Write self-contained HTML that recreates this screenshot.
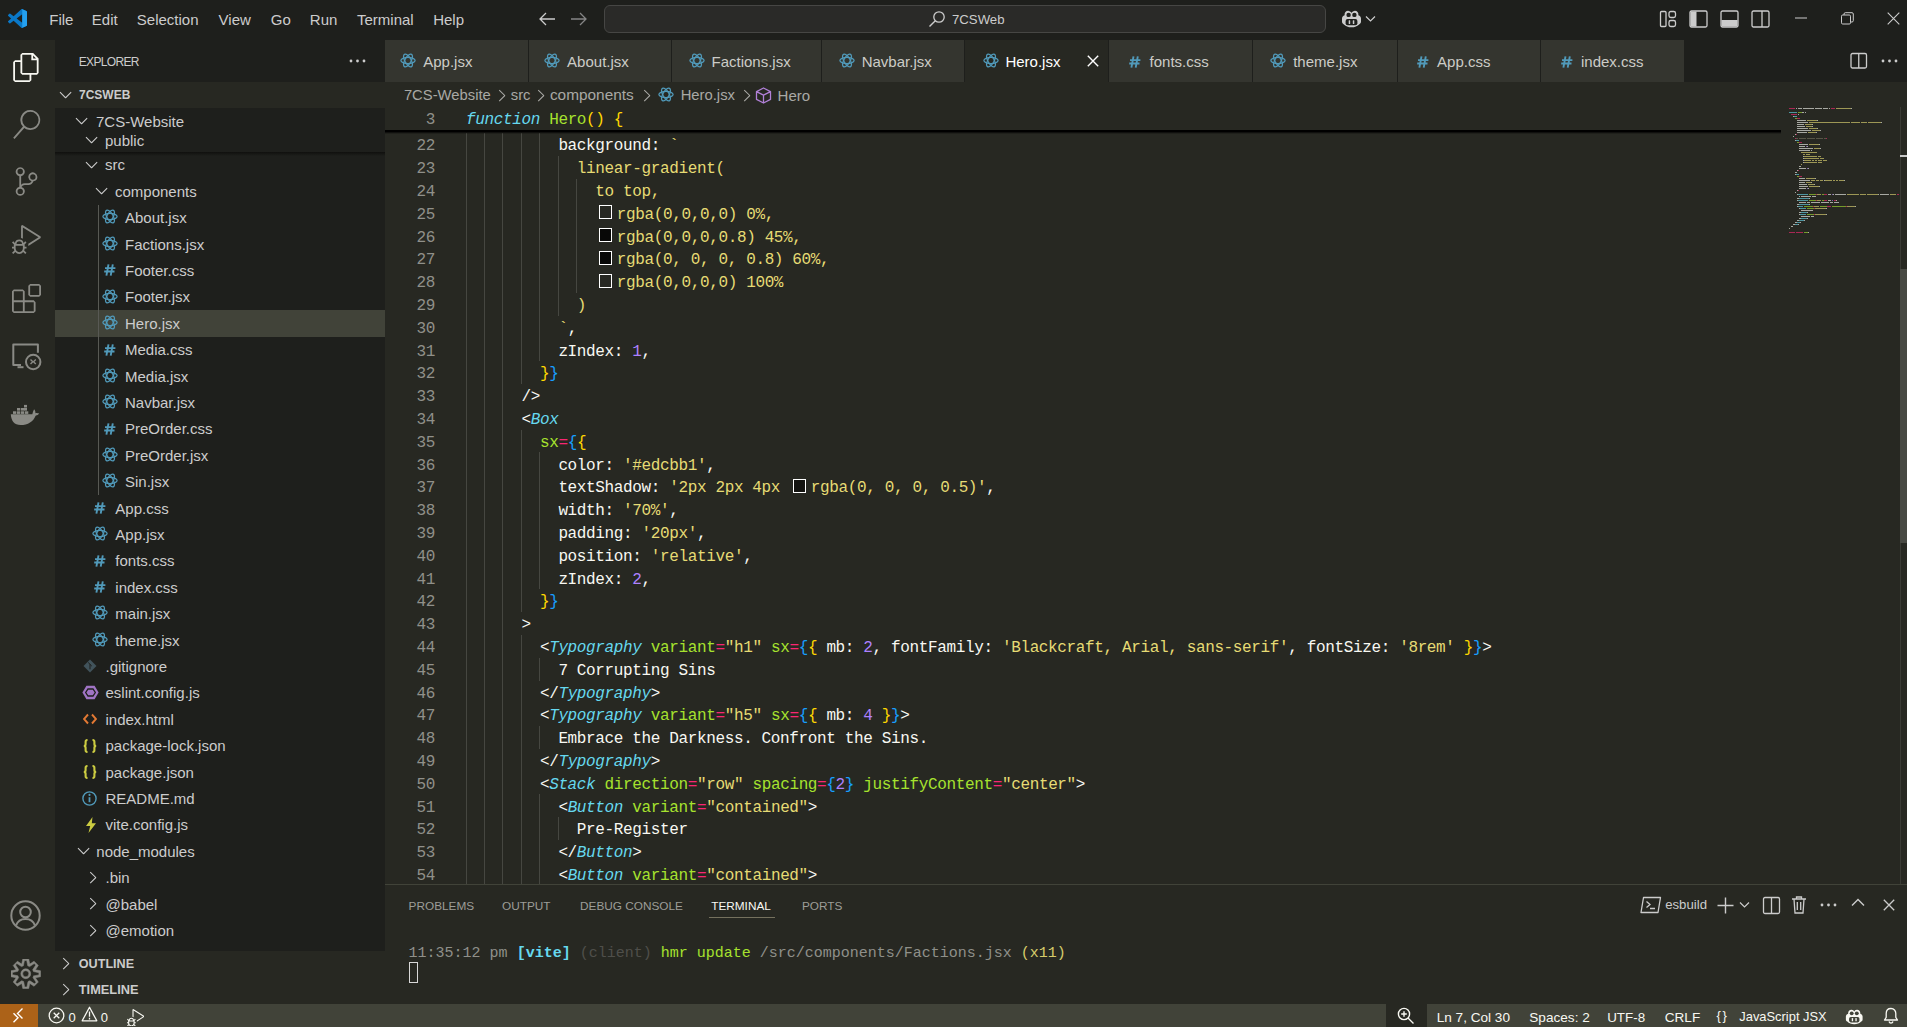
<!DOCTYPE html><html><head><meta charset="utf-8"><style>
html,body{margin:0;padding:0;width:1907px;height:1027px;overflow:hidden;background:#1e1f1c;font-family:"Liberation Sans",sans-serif;}
#root{position:relative;width:1907px;height:1027px;overflow:hidden;}
.code{font-family:"Liberation Mono",monospace;white-space:pre;letter-spacing:-0.364px;}
</style></head><body><div id="root">
<div style="position:absolute;left:0px;top:0px;width:1907px;height:40px;background:#1e1f1c;"></div>
<div style="position:absolute;left:0px;top:40px;width:55px;height:964px;background:#272822;"></div>
<div style="position:absolute;left:55px;top:40px;width:330px;height:964px;background:#1e1f1c;"></div>
<div style="position:absolute;left:385px;top:40px;width:1522px;height:42px;background:#1e1f1c;"></div>
<div style="position:absolute;left:385px;top:82px;width:1522px;height:802px;background:#272822;"></div>
<div style="position:absolute;left:385px;top:884px;width:1522px;height:120px;background:#272822;"></div>
<div style="position:absolute;left:385px;top:884px;width:1522px;height:1px;background:#414339;"></div>
<div style="position:absolute;left:0px;top:1004px;width:1907px;height:23px;background:#414339;"></div>
<svg style="position:absolute;left:8px;top:9px;" width="19" height="19" viewBox="0 0 100 100" fill="none"><path fill="#0a78c8" d="M96.46 10.8L75.86.87a6.23 6.23 0 0 0-7.1 1.21L29.55 37.85 12.46 24.88a4.16 4.16 0 0 0-5.32.24L1.64 30.1a4.17 4.17 0 0 0 0 6.16L16.46 50 1.64 63.74a4.17 4.17 0 0 0 0 6.16l5.5 4.99a4.16 4.16 0 0 0 5.32.24l17.09-12.97 39.21 35.77a6.22 6.22 0 0 0 7.1 1.21l20.6-9.92A6.25 6.25 0 0 0 100 83.6V16.4a6.25 6.25 0 0 0-3.54-5.6zM75.02 72.7L45.28 50l29.74-22.7z"/><path fill="#24a0f0" d="M75.86.87L96.46 10.8A6.25 6.25 0 0 1 100 16.4v67.2a6.25 6.25 0 0 1-3.54 5.63l-20.6 9.92a6.22 6.22 0 0 1-7.1-1.21 3.66 3.66 0 0 0 6.26-2.59V3.46A3.66 3.66 0 0 0 68.76 2.08 6.23 6.23 0 0 1 75.86.87z"/></svg>
<div style="position:absolute;left:49.3px;top:9.10px;height:21px;line-height:21px;font-size:15px;color:#cccccc;font-weight:normal;font-family:'Liberation Sans', sans-serif;white-space:pre;">File</div>
<div style="position:absolute;left:91.8px;top:9.10px;height:21px;line-height:21px;font-size:15px;color:#cccccc;font-weight:normal;font-family:'Liberation Sans', sans-serif;white-space:pre;">Edit</div>
<div style="position:absolute;left:136.8px;top:9.10px;height:21px;line-height:21px;font-size:15px;color:#cccccc;font-weight:normal;font-family:'Liberation Sans', sans-serif;white-space:pre;">Selection</div>
<div style="position:absolute;left:218.6px;top:9.10px;height:21px;line-height:21px;font-size:15px;color:#cccccc;font-weight:normal;font-family:'Liberation Sans', sans-serif;white-space:pre;">View</div>
<div style="position:absolute;left:270.8px;top:9.10px;height:21px;line-height:21px;font-size:15px;color:#cccccc;font-weight:normal;font-family:'Liberation Sans', sans-serif;white-space:pre;">Go</div>
<div style="position:absolute;left:309.8px;top:9.10px;height:21px;line-height:21px;font-size:15px;color:#cccccc;font-weight:normal;font-family:'Liberation Sans', sans-serif;white-space:pre;">Run</div>
<div style="position:absolute;left:357px;top:9.10px;height:21px;line-height:21px;font-size:15px;color:#cccccc;font-weight:normal;font-family:'Liberation Sans', sans-serif;white-space:pre;">Terminal</div>
<div style="position:absolute;left:433.2px;top:9.10px;height:21px;line-height:21px;font-size:15px;color:#cccccc;font-weight:normal;font-family:'Liberation Sans', sans-serif;white-space:pre;">Help</div>
<svg style="position:absolute;left:538px;top:11px;" width="18" height="16" viewBox="0 0 18 16" fill="none"><path d="M17 8H2M8 2L2 8l6 6" stroke="#cccccc" stroke-width="1.3"/></svg>
<svg style="position:absolute;left:570px;top:11px;" width="18" height="16" viewBox="0 0 18 16" fill="none"><path d="M1 8h15M10 2l6 6-6 6" stroke="#858585" stroke-width="1.3"/></svg>
<div style="position:absolute;left:604px;top:5px;width:720px;height:26px;border:1px solid #464644;border-radius:6px;background:#2a2a28;"></div>
<svg style="position:absolute;left:928px;top:10px;" width="18" height="18" viewBox="0 0 18 18" fill="none"><circle cx="11" cy="7" r="5.2" stroke="#cccccc" stroke-width="1.3"/><path d="M7.3 10.7L1.5 16.5" stroke="#cccccc" stroke-width="1.4"/></svg>
<div style="position:absolute;left:952px;top:11.40px;height:18px;line-height:18px;font-size:13.2px;color:#cccccc;font-weight:normal;font-family:'Liberation Sans', sans-serif;white-space:pre;">7CSWeb</div>
<svg style="position:absolute;left:1340.5px;top:9.5px;" width="22.0" height="19.0" viewBox="0 0 22.0 19.0" fill="none"><g transform="scale(1.0)"><path d="M3.6 5.3C3.3 2.3 5.3.6 7.6.9c1.5.2 2.5 1 2.9 2 .4-1 1.4-1.8 2.9-2 2.3-.3 4.3 1.4 4 4.4 1.6.6 2.6 1.7 2.6 3.2v3.3c0 1-.6 1.8-1.6 2.4C16.5 16.2 13.700 17.300 10.5 17.300S4.5 16.2 2.6 14.2C1.6 13.6 1 12.8 1 11.8V8.500c0-1.5 1-2.6 2.600-3.200z" fill="#cccccc"/><ellipse cx="7.6" cy="4.9" rx="2.2" ry="2.2" fill="#1e1f1c"/><ellipse cx="13.4" cy="4.9" rx="2.2" ry="2.2" fill="#1e1f1c"/><rect x="4.6" y="9" width="11.8" height="6.2" rx="2" fill="#1e1f1c"/><rect x="7.7" y="10.2" width="1.5" height="3.8" rx=".5" fill="#cccccc"/><rect x="11.8" y="10.2" width="1.5" height="3.8" rx=".5" fill="#cccccc"/></g></svg>
<svg style="position:absolute;left:1365px;top:15px;" width="11" height="8" viewBox="0 0 11 8" fill="none"><path d="M1 1.5l4.5 4.5L10 1.5" stroke="#cccccc" stroke-width="1.2"/></svg>
<svg style="position:absolute;left:1659px;top:10px;" width="18" height="18" viewBox="0 0 18 18" fill="none"><rect x="1.5" y="1.5" width="5.5" height="15" rx="1" stroke="#cccccc" stroke-width="1.3"/><rect x="10" y="1.5" width="6.5" height="6" rx="1.8" stroke="#cccccc" stroke-width="1.3"/><rect x="10" y="10.5" width="6.5" height="6" rx="1.8" stroke="#cccccc" stroke-width="1.3"/></svg>
<svg style="position:absolute;left:1689px;top:10px;" width="19" height="18" viewBox="0 0 19 18" fill="none"><rect x="1" y="1" width="17" height="16" rx="1.5" stroke="#cccccc" stroke-width="1.3"/><rect x="1.5" y="1.5" width="6" height="15" fill="#cccccc"/></svg>
<svg style="position:absolute;left:1720px;top:10px;" width="19" height="18" viewBox="0 0 19 18" fill="none"><rect x="1" y="1" width="17" height="16" rx="1.5" stroke="#cccccc" stroke-width="1.3"/><rect x="1.5" y="10" width="16" height="6.5" fill="#cccccc"/></svg>
<svg style="position:absolute;left:1751px;top:10px;" width="19" height="18" viewBox="0 0 19 18" fill="none"><rect x="1" y="1" width="17" height="16" rx="1.5" stroke="#cccccc" stroke-width="1.3"/><path d="M11 1v16" stroke="#cccccc" stroke-width="1.3"/></svg>
<svg style="position:absolute;left:1795px;top:17px;" width="13" height="2" viewBox="0 0 13 2" fill="none"><path d="M0 1h12" stroke="#cccccc" stroke-width="1"/></svg>
<svg style="position:absolute;left:1841px;top:12px;" width="13" height="13" viewBox="0 0 13 13" fill="none"><rect x="0.5" y="3" width="9" height="9" rx="1.2" stroke="#cccccc" stroke-width="1"/><path d="M3 3V2c0-.8.5-1.3 1.3-1.3H11c.8 0 1.3.5 1.3 1.3v6.7c0 .8-.5 1.3-1.3 1.3h-1" stroke="#cccccc" stroke-width="1"/></svg>
<svg style="position:absolute;left:1887px;top:12px;" width="13" height="13" viewBox="0 0 13 13" fill="none"><path d="M.7.7l11.6 11.6M12.3.7L.7 12.3" stroke="#cccccc" stroke-width="1.1"/></svg>
<svg style="position:absolute;left:11.5px;top:53px;" width="29" height="29" viewBox="0 0 24 24" fill="none"><path fill="#f8f8f2" fill-rule="evenodd" d="M17.5 0h-9L7 1.5V6H2.5L1 7.5v15.07L2.5 24h12.07L16 22.57V18h4.7l1.3-1.43V4.5L17.5 0zm0 2.12l2.38 2.38H17.5V2.12zm-3 20.38h-12v-15H7v9.07L8.5 18h6v4.5zm6-6h-12v-15H16V6h4.5v10.5z"/></svg>
<svg style="position:absolute;left:12px;top:110px;" width="29" height="29" viewBox="0 0 24 24" fill="none"><path fill="#8a8a85" fill-rule="evenodd" d="M15.25 0a8.25 8.25 0 0 0-6.18 13.72L1 22.88l1.12 1.12 8.05-9.12A8.251 8.251 0 1 0 15.25.01V0zm0 15a6.75 6.75 0 1 1 0-13.5 6.75 6.75 0 0 1 0 13.5z"/></svg>
<svg style="position:absolute;left:11.5px;top:167px;" width="29" height="29" viewBox="0 0 24 24" fill="none"><path fill="#8a8a85" fill-rule="evenodd" d="M21.007 8.222A3.738 3.738 0 0 0 15.045 5.2a3.737 3.737 0 0 0 1.156 6.583 2.988 2.988 0 0 1-2.668 1.67h-2.99a4.456 4.456 0 0 0-2.989 1.165V7.559a3.738 3.738 0 1 0-1.494 0v8.882a3.738 3.738 0 1 0 1.816.063 2.99 2.99 0 0 1 2.668-1.669h2.99a4.484 4.484 0 0 0 4.223-3.039 3.736 3.736 0 0 0 3.25-3.574zM4.565 3.738a2.242 2.242 0 1 1 4.484 0 2.242 2.242 0 0 1-4.484 0zm4.484 16.441a2.242 2.242 0 1 1-4.484 0 2.242 2.242 0 0 1 4.484 0zm8.221-9.715a2.242 2.242 0 1 1 0-4.485 2.242 2.242 0 0 1 0 4.485z"/></svg>
<svg style="position:absolute;left:11.5px;top:225px;" width="29" height="29" viewBox="0 0 24 24" fill="none"><path fill="#8a8a85" fill-rule="evenodd" d="M10.94 13.5l-1.32 1.32a3.73 3.73 0 0 0-7.24 0L1.06 13.5 0 14.56l1.72 1.72-.22.22V18H0v1.5h1.5v.08c.077.489.214.966.41 1.42L0 22.94 1.06 24l1.65-1.65A4.308 4.308 0 0 0 6 24a4.31 4.31 0 0 0 3.29-1.65L10.94 24 12 22.94 10.09 21c.198-.464.336-.951.41-1.45v-.1H12V18h-1.5v-1.5l-.22-.22L12 14.560l-1.06-1.06zM6 13.5a2.25 2.25 0 0 1 2.25 2.25h-4.5A2.25 2.25 0 0 1 6 13.5zm3 6a3.33 3.33 0 0 1-3 3 3.33 3.33 0 0 1-3-3v-2.25h6v2.25zm14.76-9.9v1.26L13.5 17.37V15.6l8.5-5.37L9 2v9.46a5.07 5.07 0 0 0-1.5-.72V.63L8.64 0l15.12 9.6z"/></svg>
<svg style="position:absolute;left:12px;top:284px;" width="29" height="29" viewBox="0 0 24 24" fill="none"><path fill="#8a8a85" fill-rule="evenodd" d="M13.5 1.5L15 0h7.5L24 1.5V9l-1.5 1.5H15L13.5 9V1.5zm1.5 0V9h7.5V1.5H15zM0 15V6l1.5-1.5H9L10.5 6v7.5H18l1.5 1.5v7.5L18 24H1.5L0 22.5V15zm9-1.5V6H1.5v7.5H9zM9 15H1.5v7.5H9V15zm1.5 7.5H18V15h-7.5v7.5z"/></svg>
<svg style="position:absolute;left:0px;top:330px;" width="55" height="50" viewBox="0 0 55 50" fill="none"><path d="M21 35H13.3V14.5h24.6v8.3" stroke="#8a8a85" stroke-width="2" stroke-linejoin="round" fill="none"/><path d="M17.5 37.2h6" stroke="#8a8a85" stroke-width="2"/><circle cx="33.2" cy="32" r="7.2" stroke="#8a8a85" stroke-width="2" fill="none"/><path d="M30.5 29.5l2.3 2.3-2.3 2.3M35.8 29.5l-2.3 2.3 2.3 2.3" stroke="#8a8a85" stroke-width="1.4" fill="none"/></svg>
<svg style="position:absolute;left:0px;top:400px;" width="55" height="30" viewBox="0 0 55 30" fill="none"><path d="M10.8 14.2H32.3c.5-1.8 1-3.6 1.8-5 1.2 1.3 1.4 2.8 1.3 4 1.3-.3 2.8-.1 3.8.4-.9 1.2-2 1.9-3.6 2.1C33.4 21.5 28 25 20.5 25 14.500 25 11.2 21 10.8 14.2z" fill="#8a8a85"/><g fill="#8a8a85"><rect x="13" y="11.3" width="3.3" height="2.6"/><rect x="17" y="11.3" width="3.3" height="2.6"/><rect x="21" y="11.3" width="3.3" height="2.6"/><rect x="25" y="11.3" width="3.3" height="2.6"/><rect x="17" y="8" width="3.3" height="2.6"/><rect x="21" y="8" width="3.3" height="2.6"/><rect x="24" y="4.9" width="3" height="2.6"/><rect x="24" y="8" width="3" height="2.6"/></g></svg>
<svg style="position:absolute;left:10px;top:900px;" width="31" height="31" viewBox="0 0 31 31" fill="none"><circle cx="15.5" cy="15.5" r="14.2" stroke="#8a8a85" stroke-width="2"/><circle cx="15.5" cy="12" r="5.3" stroke="#8a8a85" stroke-width="2"/><path d="M6 25.5c1.5-4.3 5-6.6 9.5-6.6s8 2.3 9.5 6.6" stroke="#8a8a85" stroke-width="2"/></svg>
<svg style="position:absolute;left:11px;top:959px;" width="29.5" height="29.5" viewBox="0 0 24 24" fill="none"><path fill="#8a8a85" stroke="#8a8a85" stroke-width="0.45" fill-rule="evenodd" d="M19.85 8.75l4.15.83v4.84l-4.15.83 2.35 3.52-3.43 3.43-3.52-2.35-.83 4.15H9.58l-.83-4.15-3.52 2.35-3.43-3.43 2.35-3.52L0 14.42V9.58l4.15-.83L1.8 5.23 5.23 1.8l3.52 2.35L9.58 0h4.84l.83 4.15 3.52-2.35 3.43 3.43-2.35 3.52zm-1.57 5.07l4.42-.88V11.1l-4.42-.88-.62-1.5 2.5-3.75L18.9 3.7l-3.75 2.5-1.5-.62-.88-4.42h-1.84l-.88 4.42-1.5.62L4.8 3.7 3.7 4.8l2.5 3.75-.62 1.5-4.42.88v1.84l4.42.88.62 1.5-2.5 3.75 1.3 1.3 3.75-2.5 1.5.62.88 4.42h1.84l.88-4.42 1.5-.62 3.75 2.5 1.3-1.3-2.5-3.75.62-1.5zM12 8a4 4 0 1 1 0 8 4 4 0 0 1 0-8zm0 6.5a2.5 2.5 0 1 0 0-5 2.5 2.5 0 0 0 0 5z"/></svg>
<div style="position:absolute;left:78.8px;top:53.80px;height:17px;line-height:17px;font-size:12px;color:#cccccc;font-weight:normal;font-family:'Liberation Sans', sans-serif;white-space:pre;letter-spacing:-0.68px;">EXPLORER</div>
<svg style="position:absolute;left:349px;top:59px;" width="18" height="4" viewBox="0 0 18 4" fill="none"><circle cx="2" cy="2" r="1.4" fill="#cccccc"/><circle cx="8.5" cy="2" r="1.4" fill="#cccccc"/><circle cx="15" cy="2" r="1.4" fill="#cccccc"/></svg>
<div style="position:absolute;left:55px;top:82px;width:330px;height:26px;background:#272822;"></div>
<svg style="position:absolute;left:56.4px;top:85px;" width="19.2" height="19.2" viewBox="0 0 16 16" fill="none"><path fill="#cccccc" d="M7.976 10.072l4.357-4.357.62.618L8.284 11h-.618L3 6.333l.619-.618 4.357 4.357z"/></svg>
<div style="position:absolute;left:79px;top:87.00px;height:17px;line-height:17px;font-size:12px;color:#cccccc;font-weight:bold;font-family:'Liberation Sans', sans-serif;white-space:pre;">7CSWEB</div>
<div style="position:absolute;left:55px;top:310px;width:330px;height:27px;background:#414339;"></div>
<div style="position:absolute;left:98px;top:204.5px;width:1px;height:290.4px;background:#585954;"></div>
<svg style="position:absolute;left:82.2px;top:154.79999999999998px;" width="19.2" height="19.2" viewBox="0 0 16 16" fill="none"><path fill="#cccccc" d="M7.976 10.072l4.357-4.357.62.618L8.284 11h-.618L3 6.333l.619-.618 4.357 4.357z"/></svg>
<div style="position:absolute;left:105px;top:154.30px;height:21px;line-height:21px;font-size:15px;color:#cccccc;font-weight:normal;font-family:'Liberation Sans', sans-serif;white-space:pre;">src</div>
<svg style="position:absolute;left:92.2px;top:181.2px;" width="19.2" height="19.2" viewBox="0 0 16 16" fill="none"><path fill="#cccccc" d="M7.976 10.072l4.357-4.357.62.618L8.284 11h-.618L3 6.333l.619-.618 4.357 4.357z"/></svg>
<div style="position:absolute;left:115px;top:180.70px;height:21px;line-height:21px;font-size:15px;color:#cccccc;font-weight:normal;font-family:'Liberation Sans', sans-serif;white-space:pre;">components</div>
<svg style="position:absolute;left:102.0px;top:209.29999999999995px;" width="16" height="15" viewBox="0 0 16 15" fill="none"><g stroke="#519aba" stroke-width="1.25" fill="none"><ellipse cx="8" cy="7.5" rx="7.1" ry="3.1"/><ellipse cx="8" cy="7.5" rx="7.1" ry="3.1" transform="rotate(60 8 7.5)"/><ellipse cx="8" cy="7.5" rx="7.1" ry="3.1" transform="rotate(-60 8 7.5)"/></g></svg>
<div style="position:absolute;left:125px;top:207.10px;height:21px;line-height:21px;font-size:15px;color:#cccccc;font-weight:normal;font-family:'Liberation Sans', sans-serif;white-space:pre;">About.jsx</div>
<svg style="position:absolute;left:102.0px;top:235.69999999999996px;" width="16" height="15" viewBox="0 0 16 15" fill="none"><g stroke="#519aba" stroke-width="1.25" fill="none"><ellipse cx="8" cy="7.5" rx="7.1" ry="3.1"/><ellipse cx="8" cy="7.5" rx="7.1" ry="3.1" transform="rotate(60 8 7.5)"/><ellipse cx="8" cy="7.5" rx="7.1" ry="3.1" transform="rotate(-60 8 7.5)"/></g></svg>
<div style="position:absolute;left:125px;top:233.50px;height:21px;line-height:21px;font-size:15px;color:#cccccc;font-weight:normal;font-family:'Liberation Sans', sans-serif;white-space:pre;">Factions.jsx</div>
<svg style="position:absolute;left:104.0px;top:264.4px;" width="12" height="12" viewBox="0 0 12 12" fill="none"><path d="M4.5 0.3L2.4 11.6M8.8 0.3L6.7 11.6M1 4.1h10.4M0.2 7.5h10.3" stroke="#519aba" stroke-width="1.9"/></svg>
<div style="position:absolute;left:125px;top:259.90px;height:21px;line-height:21px;font-size:15px;color:#cccccc;font-weight:normal;font-family:'Liberation Sans', sans-serif;white-space:pre;">Footer.css</div>
<svg style="position:absolute;left:102.0px;top:288.5px;" width="16" height="15" viewBox="0 0 16 15" fill="none"><g stroke="#519aba" stroke-width="1.25" fill="none"><ellipse cx="8" cy="7.5" rx="7.1" ry="3.1"/><ellipse cx="8" cy="7.5" rx="7.1" ry="3.1" transform="rotate(60 8 7.5)"/><ellipse cx="8" cy="7.5" rx="7.1" ry="3.1" transform="rotate(-60 8 7.5)"/></g></svg>
<div style="position:absolute;left:125px;top:286.30px;height:21px;line-height:21px;font-size:15px;color:#cccccc;font-weight:normal;font-family:'Liberation Sans', sans-serif;white-space:pre;">Footer.jsx</div>
<svg style="position:absolute;left:102.0px;top:314.9px;" width="16" height="15" viewBox="0 0 16 15" fill="none"><g stroke="#519aba" stroke-width="1.25" fill="none"><ellipse cx="8" cy="7.5" rx="7.1" ry="3.1"/><ellipse cx="8" cy="7.5" rx="7.1" ry="3.1" transform="rotate(60 8 7.5)"/><ellipse cx="8" cy="7.5" rx="7.1" ry="3.1" transform="rotate(-60 8 7.5)"/></g></svg>
<div style="position:absolute;left:125px;top:312.70px;height:21px;line-height:21px;font-size:15px;color:#cccccc;font-weight:normal;font-family:'Liberation Sans', sans-serif;white-space:pre;">Hero.jsx</div>
<svg style="position:absolute;left:104.0px;top:343.59999999999997px;" width="12" height="12" viewBox="0 0 12 12" fill="none"><path d="M4.5 0.3L2.4 11.6M8.8 0.3L6.7 11.6M1 4.1h10.4M0.2 7.5h10.3" stroke="#519aba" stroke-width="1.9"/></svg>
<div style="position:absolute;left:125px;top:339.10px;height:21px;line-height:21px;font-size:15px;color:#cccccc;font-weight:normal;font-family:'Liberation Sans', sans-serif;white-space:pre;">Media.css</div>
<svg style="position:absolute;left:102.0px;top:367.69999999999993px;" width="16" height="15" viewBox="0 0 16 15" fill="none"><g stroke="#519aba" stroke-width="1.25" fill="none"><ellipse cx="8" cy="7.5" rx="7.1" ry="3.1"/><ellipse cx="8" cy="7.5" rx="7.1" ry="3.1" transform="rotate(60 8 7.5)"/><ellipse cx="8" cy="7.5" rx="7.1" ry="3.1" transform="rotate(-60 8 7.5)"/></g></svg>
<div style="position:absolute;left:125px;top:365.50px;height:21px;line-height:21px;font-size:15px;color:#cccccc;font-weight:normal;font-family:'Liberation Sans', sans-serif;white-space:pre;">Media.jsx</div>
<svg style="position:absolute;left:102.0px;top:394.09999999999997px;" width="16" height="15" viewBox="0 0 16 15" fill="none"><g stroke="#519aba" stroke-width="1.25" fill="none"><ellipse cx="8" cy="7.5" rx="7.1" ry="3.1"/><ellipse cx="8" cy="7.5" rx="7.1" ry="3.1" transform="rotate(60 8 7.5)"/><ellipse cx="8" cy="7.5" rx="7.1" ry="3.1" transform="rotate(-60 8 7.5)"/></g></svg>
<div style="position:absolute;left:125px;top:391.90px;height:21px;line-height:21px;font-size:15px;color:#cccccc;font-weight:normal;font-family:'Liberation Sans', sans-serif;white-space:pre;">Navbar.jsx</div>
<svg style="position:absolute;left:104.0px;top:422.8px;" width="12" height="12" viewBox="0 0 12 12" fill="none"><path d="M4.5 0.3L2.4 11.6M8.8 0.3L6.7 11.6M1 4.1h10.4M0.2 7.5h10.3" stroke="#519aba" stroke-width="1.9"/></svg>
<div style="position:absolute;left:125px;top:418.30px;height:21px;line-height:21px;font-size:15px;color:#cccccc;font-weight:normal;font-family:'Liberation Sans', sans-serif;white-space:pre;">PreOrder.css</div>
<svg style="position:absolute;left:102.0px;top:446.9px;" width="16" height="15" viewBox="0 0 16 15" fill="none"><g stroke="#519aba" stroke-width="1.25" fill="none"><ellipse cx="8" cy="7.5" rx="7.1" ry="3.1"/><ellipse cx="8" cy="7.5" rx="7.1" ry="3.1" transform="rotate(60 8 7.5)"/><ellipse cx="8" cy="7.5" rx="7.1" ry="3.1" transform="rotate(-60 8 7.5)"/></g></svg>
<div style="position:absolute;left:125px;top:444.70px;height:21px;line-height:21px;font-size:15px;color:#cccccc;font-weight:normal;font-family:'Liberation Sans', sans-serif;white-space:pre;">PreOrder.jsx</div>
<svg style="position:absolute;left:102.0px;top:473.29999999999995px;" width="16" height="15" viewBox="0 0 16 15" fill="none"><g stroke="#519aba" stroke-width="1.25" fill="none"><ellipse cx="8" cy="7.5" rx="7.1" ry="3.1"/><ellipse cx="8" cy="7.5" rx="7.1" ry="3.1" transform="rotate(60 8 7.5)"/><ellipse cx="8" cy="7.5" rx="7.1" ry="3.1" transform="rotate(-60 8 7.5)"/></g></svg>
<div style="position:absolute;left:125px;top:471.10px;height:21px;line-height:21px;font-size:15px;color:#cccccc;font-weight:normal;font-family:'Liberation Sans', sans-serif;white-space:pre;">Sin.jsx</div>
<svg style="position:absolute;left:94.3px;top:501.99999999999994px;" width="12" height="12" viewBox="0 0 12 12" fill="none"><path d="M4.5 0.3L2.4 11.6M8.8 0.3L6.7 11.6M1 4.1h10.4M0.2 7.5h10.3" stroke="#519aba" stroke-width="1.9"/></svg>
<div style="position:absolute;left:115.3px;top:497.50px;height:21px;line-height:21px;font-size:15px;color:#cccccc;font-weight:normal;font-family:'Liberation Sans', sans-serif;white-space:pre;">App.css</div>
<svg style="position:absolute;left:92.3px;top:526.1px;" width="16" height="15" viewBox="0 0 16 15" fill="none"><g stroke="#519aba" stroke-width="1.25" fill="none"><ellipse cx="8" cy="7.5" rx="7.1" ry="3.1"/><ellipse cx="8" cy="7.5" rx="7.1" ry="3.1" transform="rotate(60 8 7.5)"/><ellipse cx="8" cy="7.5" rx="7.1" ry="3.1" transform="rotate(-60 8 7.5)"/></g></svg>
<div style="position:absolute;left:115.3px;top:523.90px;height:21px;line-height:21px;font-size:15px;color:#cccccc;font-weight:normal;font-family:'Liberation Sans', sans-serif;white-space:pre;">App.jsx</div>
<svg style="position:absolute;left:94.3px;top:554.8000000000001px;" width="12" height="12" viewBox="0 0 12 12" fill="none"><path d="M4.5 0.3L2.4 11.6M8.8 0.3L6.7 11.6M1 4.1h10.4M0.2 7.5h10.3" stroke="#519aba" stroke-width="1.9"/></svg>
<div style="position:absolute;left:115.3px;top:550.30px;height:21px;line-height:21px;font-size:15px;color:#cccccc;font-weight:normal;font-family:'Liberation Sans', sans-serif;white-space:pre;">fonts.css</div>
<svg style="position:absolute;left:94.3px;top:581.2px;" width="12" height="12" viewBox="0 0 12 12" fill="none"><path d="M4.5 0.3L2.4 11.6M8.8 0.3L6.7 11.6M1 4.1h10.4M0.2 7.5h10.3" stroke="#519aba" stroke-width="1.9"/></svg>
<div style="position:absolute;left:115.3px;top:576.70px;height:21px;line-height:21px;font-size:15px;color:#cccccc;font-weight:normal;font-family:'Liberation Sans', sans-serif;white-space:pre;">index.css</div>
<svg style="position:absolute;left:92.3px;top:605.3000000000001px;" width="16" height="15" viewBox="0 0 16 15" fill="none"><g stroke="#519aba" stroke-width="1.25" fill="none"><ellipse cx="8" cy="7.5" rx="7.1" ry="3.1"/><ellipse cx="8" cy="7.5" rx="7.1" ry="3.1" transform="rotate(60 8 7.5)"/><ellipse cx="8" cy="7.5" rx="7.1" ry="3.1" transform="rotate(-60 8 7.5)"/></g></svg>
<div style="position:absolute;left:115.3px;top:603.10px;height:21px;line-height:21px;font-size:15px;color:#cccccc;font-weight:normal;font-family:'Liberation Sans', sans-serif;white-space:pre;">main.jsx</div>
<svg style="position:absolute;left:92.3px;top:631.7px;" width="16" height="15" viewBox="0 0 16 15" fill="none"><g stroke="#519aba" stroke-width="1.25" fill="none"><ellipse cx="8" cy="7.5" rx="7.1" ry="3.1"/><ellipse cx="8" cy="7.5" rx="7.1" ry="3.1" transform="rotate(60 8 7.5)"/><ellipse cx="8" cy="7.5" rx="7.1" ry="3.1" transform="rotate(-60 8 7.5)"/></g></svg>
<div style="position:absolute;left:115.3px;top:629.50px;height:21px;line-height:21px;font-size:15px;color:#cccccc;font-weight:normal;font-family:'Liberation Sans', sans-serif;white-space:pre;">theme.jsx</div>
<svg style="position:absolute;left:83.0px;top:659.4px;" width="14" height="14" viewBox="0 0 14 14" fill="none"><path d="M7 0.5L13.5 7 7 13.5 0.5 7z" fill="#41535b"/><path d="M5.2 3.5l3.6 3.6M7 5.3v5" stroke="#1e1f1c" stroke-width="1"/></svg>
<div style="position:absolute;left:105.5px;top:655.90px;height:21px;line-height:21px;font-size:15px;color:#cccccc;font-weight:normal;font-family:'Liberation Sans', sans-serif;white-space:pre;">.gitignore</div>
<svg style="position:absolute;left:81.5px;top:685.3000000000001px;" width="17" height="15" viewBox="0 0 17 15" fill="none"><path d="M4.4 .8h8.2l4 6.7-4 6.7H4.4L.4 7.5z" fill="#a074c4"/><path d="M6 4h5l2.3 3.5L11 11H6L3.7 7.5z" stroke="#1e1f1c" stroke-width="1.3" fill="none"/></svg>
<div style="position:absolute;left:105.5px;top:682.30px;height:21px;line-height:21px;font-size:15px;color:#cccccc;font-weight:normal;font-family:'Liberation Sans', sans-serif;white-space:pre;">eslint.config.js</div>
<svg style="position:absolute;left:83.0px;top:713.2px;" width="14" height="12" viewBox="0 0 14 12" fill="none"><path d="M5 1.5L1 6l4 4.5M9 1.5L13 6l-4 4.5" stroke="#e37933" stroke-width="1.9"/></svg>
<div style="position:absolute;left:105.5px;top:708.70px;height:21px;line-height:21px;font-size:15px;color:#cccccc;font-weight:normal;font-family:'Liberation Sans', sans-serif;white-space:pre;">index.html</div>
<svg style="position:absolute;left:83.0px;top:738.6px;" width="14" height="14" viewBox="0 0 14 14" fill="none"><path d="M4.5 1C2.5 1 2.6 2.2 2.6 3.6v1.7C2.6 6.4 1.8 7 .8 7c1 0 1.8.6 1.8 1.7v1.7c0 1.4-.1 2.6 1.9 2.6M9.5 1c2 0 1.9 1.2 1.9 2.6v1.7c0 1.1.8 1.7 1.8 1.7-1 0-1.8.6-1.8 1.7v1.7c0 1.4.1 2.6-1.9 2.6" stroke="#cbcb41" stroke-width="2.1"/></svg>
<div style="position:absolute;left:105.5px;top:735.10px;height:21px;line-height:21px;font-size:15px;color:#cccccc;font-weight:normal;font-family:'Liberation Sans', sans-serif;white-space:pre;">package-lock.json</div>
<svg style="position:absolute;left:83.0px;top:765.0px;" width="14" height="14" viewBox="0 0 14 14" fill="none"><path d="M4.5 1C2.5 1 2.6 2.2 2.6 3.6v1.7C2.6 6.4 1.8 7 .8 7c1 0 1.8.6 1.8 1.7v1.7c0 1.4-.1 2.6 1.9 2.6M9.5 1c2 0 1.9 1.2 1.9 2.6v1.7c0 1.1.8 1.7 1.8 1.7-1 0-1.8.6-1.8 1.7v1.7c0 1.4.1 2.6-1.9 2.6" stroke="#cbcb41" stroke-width="2.1"/></svg>
<div style="position:absolute;left:105.5px;top:761.50px;height:21px;line-height:21px;font-size:15px;color:#cccccc;font-weight:normal;font-family:'Liberation Sans', sans-serif;white-space:pre;">package.json</div>
<svg style="position:absolute;left:82.0px;top:791.4px;" width="15" height="15" viewBox="0 0 15 15" fill="none"><circle cx="7.5" cy="7.5" r="6.6" stroke="#519aba" stroke-width="1.4"/><path d="M7.5 6.2v5" stroke="#519aba" stroke-width="1.8"/><circle cx="7.5" cy="3.9" r="1.05" fill="#519aba"/></svg>
<div style="position:absolute;left:105.5px;top:787.90px;height:21px;line-height:21px;font-size:15px;color:#cccccc;font-weight:normal;font-family:'Liberation Sans', sans-serif;white-space:pre;">README.md</div>
<svg style="position:absolute;left:85.0px;top:816.8000000000001px;" width="12" height="16" viewBox="0 0 12 16" fill="none"><path d="M7.5 0L1 9h4.2L3.5 16 11 6.3H6.8z" fill="#cbcb41"/></svg>
<div style="position:absolute;left:105.5px;top:814.30px;height:21px;line-height:21px;font-size:15px;color:#cccccc;font-weight:normal;font-family:'Liberation Sans', sans-serif;white-space:pre;">vite.config.js</div>
<svg style="position:absolute;left:73.5px;top:841.2px;" width="19.2" height="19.2" viewBox="0 0 16 16" fill="none"><path fill="#cccccc" d="M7.976 10.072l4.357-4.357.62.618L8.284 11h-.618L3 6.333l.619-.618 4.357 4.357z"/></svg>
<div style="position:absolute;left:96.3px;top:840.70px;height:21px;line-height:21px;font-size:15px;color:#cccccc;font-weight:normal;font-family:'Liberation Sans', sans-serif;white-space:pre;">node_modules</div>
<svg style="position:absolute;left:82.9px;top:868.0px;" width="19.2" height="19.2" viewBox="0 0 16 16" fill="none"><path fill="#cccccc" d="M10.072 8.024L5.715 3.667l.618-.62L11 7.716v.618L6.333 13l-.618-.619 4.357-4.357z"/></svg>
<div style="position:absolute;left:105.5px;top:867.10px;height:21px;line-height:21px;font-size:15px;color:#cccccc;font-weight:normal;font-family:'Liberation Sans', sans-serif;white-space:pre;">.bin</div>
<svg style="position:absolute;left:82.9px;top:894.4px;" width="19.2" height="19.2" viewBox="0 0 16 16" fill="none"><path fill="#cccccc" d="M10.072 8.024L5.715 3.667l.618-.62L11 7.716v.618L6.333 13l-.618-.619 4.357-4.357z"/></svg>
<div style="position:absolute;left:105.5px;top:893.50px;height:21px;line-height:21px;font-size:15px;color:#cccccc;font-weight:normal;font-family:'Liberation Sans', sans-serif;white-space:pre;">@babel</div>
<svg style="position:absolute;left:82.9px;top:920.8px;" width="19.2" height="19.2" viewBox="0 0 16 16" fill="none"><path fill="#cccccc" d="M10.072 8.024L5.715 3.667l.618-.62L11 7.716v.618L6.333 13l-.618-.619 4.357-4.357z"/></svg>
<div style="position:absolute;left:105.5px;top:919.90px;height:21px;line-height:21px;font-size:15px;color:#cccccc;font-weight:normal;font-family:'Liberation Sans', sans-serif;white-space:pre;">@emotion</div>
<div style="position:absolute;left:55px;top:108px;width:330px;height:44px;background:#1e1f1c;"></div>
<svg style="position:absolute;left:72.4px;top:111px;" width="19.2" height="19.2" viewBox="0 0 16 16" fill="none"><path fill="#cccccc" d="M7.976 10.072l4.357-4.357.62.618L8.284 11h-.618L3 6.333l.619-.618 4.357 4.357z"/></svg>
<div style="position:absolute;left:96px;top:110.50px;height:21px;line-height:21px;font-size:15px;color:#cccccc;font-weight:normal;font-family:'Liberation Sans', sans-serif;white-space:pre;">7CS-Website</div>
<svg style="position:absolute;left:82.4px;top:130px;" width="19.2" height="19.2" viewBox="0 0 16 16" fill="none"><path fill="#cccccc" d="M7.976 10.072l4.357-4.357.62.618L8.284 11h-.618L3 6.333l.619-.618 4.357 4.357z"/></svg>
<div style="position:absolute;left:105px;top:129.70px;height:21px;line-height:21px;font-size:15px;color:#cccccc;font-weight:normal;font-family:'Liberation Sans', sans-serif;white-space:pre;">public</div>
<div style="position:absolute;left:55px;top:152px;width:330px;height:4px;background:linear-gradient(#0c0c0a,rgba(0,0,0,0));opacity:.8"></div>
<div style="position:absolute;left:55px;top:951px;width:330px;height:53px;background:#272822;"></div>
<svg style="position:absolute;left:56.4px;top:953.9px;" width="19.2" height="19.2" viewBox="0 0 16 16" fill="none"><path fill="#cccccc" d="M10.072 8.024L5.715 3.667l.618-.62L11 7.716v.618L6.333 13l-.618-.619 4.357-4.357z"/></svg>
<div style="position:absolute;left:78.8px;top:954.50px;height:18px;line-height:18px;font-size:12.6px;color:#cccccc;font-weight:bold;font-family:'Liberation Sans', sans-serif;white-space:pre;">OUTLINE</div>
<svg style="position:absolute;left:56.4px;top:980.4px;" width="19.2" height="19.2" viewBox="0 0 16 16" fill="none"><path fill="#cccccc" d="M10.072 8.024L5.715 3.667l.618-.62L11 7.716v.618L6.333 13l-.618-.619 4.357-4.357z"/></svg>
<div style="position:absolute;left:78.8px;top:981.00px;height:18px;line-height:18px;font-size:12.8px;color:#cccccc;font-weight:bold;font-family:'Liberation Sans', sans-serif;white-space:pre;">TIMELINE</div>
<div style="position:absolute;left:385px;top:40px;width:143px;height:42px;background:#34352f;"></div>
<svg style="position:absolute;left:400.3px;top:53.2px;" width="16" height="15" viewBox="0 0 16 15" fill="none"><g stroke="#519aba" stroke-width="1.25" fill="none"><ellipse cx="8" cy="7.5" rx="7.1" ry="3.1"/><ellipse cx="8" cy="7.5" rx="7.1" ry="3.1" transform="rotate(60 8 7.5)"/><ellipse cx="8" cy="7.5" rx="7.1" ry="3.1" transform="rotate(-60 8 7.5)"/></g></svg>
<div style="position:absolute;left:423.2px;top:50.80px;height:21px;line-height:21px;font-size:15px;color:#ccccc7;font-weight:normal;font-family:'Liberation Sans', sans-serif;white-space:pre;">App.jsx</div>
<div style="position:absolute;left:529px;top:40px;width:142px;height:42px;background:#34352f;"></div>
<svg style="position:absolute;left:544.2px;top:53.2px;" width="16" height="15" viewBox="0 0 16 15" fill="none"><g stroke="#519aba" stroke-width="1.25" fill="none"><ellipse cx="8" cy="7.5" rx="7.1" ry="3.1"/><ellipse cx="8" cy="7.5" rx="7.1" ry="3.1" transform="rotate(60 8 7.5)"/><ellipse cx="8" cy="7.5" rx="7.1" ry="3.1" transform="rotate(-60 8 7.5)"/></g></svg>
<div style="position:absolute;left:567.1px;top:50.80px;height:21px;line-height:21px;font-size:15px;color:#ccccc7;font-weight:normal;font-family:'Liberation Sans', sans-serif;white-space:pre;">About.jsx</div>
<div style="position:absolute;left:672px;top:40px;width:149px;height:42px;background:#34352f;"></div>
<svg style="position:absolute;left:688.6px;top:53.2px;" width="16" height="15" viewBox="0 0 16 15" fill="none"><g stroke="#519aba" stroke-width="1.25" fill="none"><ellipse cx="8" cy="7.5" rx="7.1" ry="3.1"/><ellipse cx="8" cy="7.5" rx="7.1" ry="3.1" transform="rotate(60 8 7.5)"/><ellipse cx="8" cy="7.5" rx="7.1" ry="3.1" transform="rotate(-60 8 7.5)"/></g></svg>
<div style="position:absolute;left:711.5px;top:50.80px;height:21px;line-height:21px;font-size:15px;color:#ccccc7;font-weight:normal;font-family:'Liberation Sans', sans-serif;white-space:pre;">Factions.jsx</div>
<div style="position:absolute;left:822px;top:40px;width:142px;height:42px;background:#34352f;"></div>
<svg style="position:absolute;left:838.8000000000001px;top:53.2px;" width="16" height="15" viewBox="0 0 16 15" fill="none"><g stroke="#519aba" stroke-width="1.25" fill="none"><ellipse cx="8" cy="7.5" rx="7.1" ry="3.1"/><ellipse cx="8" cy="7.5" rx="7.1" ry="3.1" transform="rotate(60 8 7.5)"/><ellipse cx="8" cy="7.5" rx="7.1" ry="3.1" transform="rotate(-60 8 7.5)"/></g></svg>
<div style="position:absolute;left:861.7px;top:50.80px;height:21px;line-height:21px;font-size:15px;color:#ccccc7;font-weight:normal;font-family:'Liberation Sans', sans-serif;white-space:pre;">Navbar.jsx</div>
<div style="position:absolute;left:965px;top:40px;width:143px;height:42px;background:#272822;"></div>
<svg style="position:absolute;left:982.5px;top:53.2px;" width="16" height="15" viewBox="0 0 16 15" fill="none"><g stroke="#519aba" stroke-width="1.25" fill="none"><ellipse cx="8" cy="7.5" rx="7.1" ry="3.1"/><ellipse cx="8" cy="7.5" rx="7.1" ry="3.1" transform="rotate(60 8 7.5)"/><ellipse cx="8" cy="7.5" rx="7.1" ry="3.1" transform="rotate(-60 8 7.5)"/></g></svg>
<div style="position:absolute;left:1005.4px;top:50.80px;height:21px;line-height:21px;font-size:15px;color:#ffffff;font-weight:normal;font-family:'Liberation Sans', sans-serif;white-space:pre;">Hero.jsx</div>
<svg style="position:absolute;left:1087px;top:55px;" width="12" height="12" viewBox="0 0 12 12" fill="none"><path d="M.8.8l10.4 10.4M11.2.8L.8 11.2" stroke="#ffffff" stroke-width="1.4"/></svg>
<div style="position:absolute;left:1109px;top:40px;width:143px;height:42px;background:#34352f;"></div>
<svg style="position:absolute;left:1129.1px;top:55.5px;" width="12" height="12" viewBox="0 0 12 12" fill="none"><path d="M4.5 0.3L2.4 11.6M8.8 0.3L6.7 11.6M1 4.1h10.4M0.2 7.5h10.3" stroke="#519aba" stroke-width="1.9"/></svg>
<div style="position:absolute;left:1149.6px;top:50.80px;height:21px;line-height:21px;font-size:15px;color:#ccccc7;font-weight:normal;font-family:'Liberation Sans', sans-serif;white-space:pre;">fonts.css</div>
<div style="position:absolute;left:1253px;top:40px;width:144px;height:42px;background:#34352f;"></div>
<svg style="position:absolute;left:1270.3px;top:53.2px;" width="16" height="15" viewBox="0 0 16 15" fill="none"><g stroke="#519aba" stroke-width="1.25" fill="none"><ellipse cx="8" cy="7.5" rx="7.1" ry="3.1"/><ellipse cx="8" cy="7.5" rx="7.1" ry="3.1" transform="rotate(60 8 7.5)"/><ellipse cx="8" cy="7.5" rx="7.1" ry="3.1" transform="rotate(-60 8 7.5)"/></g></svg>
<div style="position:absolute;left:1293.2px;top:50.80px;height:21px;line-height:21px;font-size:15px;color:#ccccc7;font-weight:normal;font-family:'Liberation Sans', sans-serif;white-space:pre;">theme.jsx</div>
<div style="position:absolute;left:1398px;top:40px;width:142px;height:42px;background:#34352f;"></div>
<svg style="position:absolute;left:1416.6px;top:55.5px;" width="12" height="12" viewBox="0 0 12 12" fill="none"><path d="M4.5 0.3L2.4 11.6M8.8 0.3L6.7 11.6M1 4.1h10.4M0.2 7.5h10.3" stroke="#519aba" stroke-width="1.9"/></svg>
<div style="position:absolute;left:1437.1px;top:50.80px;height:21px;line-height:21px;font-size:15px;color:#ccccc7;font-weight:normal;font-family:'Liberation Sans', sans-serif;white-space:pre;">App.css</div>
<div style="position:absolute;left:1541px;top:40px;width:143px;height:42px;background:#34352f;"></div>
<svg style="position:absolute;left:1560.5px;top:55.5px;" width="12" height="12" viewBox="0 0 12 12" fill="none"><path d="M4.5 0.3L2.4 11.6M8.8 0.3L6.7 11.6M1 4.1h10.4M0.2 7.5h10.3" stroke="#519aba" stroke-width="1.9"/></svg>
<div style="position:absolute;left:1581px;top:50.80px;height:21px;line-height:21px;font-size:15px;color:#ccccc7;font-weight:normal;font-family:'Liberation Sans', sans-serif;white-space:pre;">index.css</div>
<svg style="position:absolute;left:1850px;top:52px;" width="18" height="18" viewBox="0 0 18 18" fill="none"><rect x="1" y="1.5" width="15.5" height="14.5" rx="1.5" stroke="#cccccc" stroke-width="1.3"/><path d="M8.75 1.5v14.5" stroke="#cccccc" stroke-width="1.3"/></svg>
<svg style="position:absolute;left:1881px;top:59px;" width="17" height="4" viewBox="0 0 17 4" fill="none"><circle cx="2" cy="2" r="1.4" fill="#cccccc"/><circle cx="8.5" cy="2" r="1.4" fill="#cccccc"/><circle cx="15" cy="2" r="1.4" fill="#cccccc"/></svg>
<div style="position:absolute;left:403.9px;top:84.80px;height:21px;line-height:21px;font-size:14.8px;color:#a9a9a5;font-weight:normal;font-family:'Liberation Sans', sans-serif;white-space:pre;">7CS-Website</div>
<svg style="position:absolute;left:492.4px;top:85.7px;" width="19.2" height="19.2" viewBox="0 0 16 16" fill="none"><path fill="#a9a9a5" d="M10.072 8.024L5.715 3.667l.618-.62L11 7.716v.618L6.333 13l-.618-.619 4.357-4.357z"/></svg>
<svg style="position:absolute;left:531.4px;top:85.7px;" width="19.2" height="19.2" viewBox="0 0 16 16" fill="none"><path fill="#a9a9a5" d="M10.072 8.024L5.715 3.667l.618-.62L11 7.716v.618L6.333 13l-.618-.619 4.357-4.357z"/></svg>
<svg style="position:absolute;left:637.4px;top:85.7px;" width="19.2" height="19.2" viewBox="0 0 16 16" fill="none"><path fill="#a9a9a5" d="M10.072 8.024L5.715 3.667l.618-.62L11 7.716v.618L6.333 13l-.618-.619 4.357-4.357z"/></svg>
<svg style="position:absolute;left:736.8px;top:85.7px;" width="19.2" height="19.2" viewBox="0 0 16 16" fill="none"><path fill="#a9a9a5" d="M10.072 8.024L5.715 3.667l.618-.62L11 7.716v.618L6.333 13l-.618-.619 4.357-4.357z"/></svg>
<div style="position:absolute;left:510.8px;top:84.80px;height:21px;line-height:21px;font-size:14.8px;color:#a9a9a5;font-weight:normal;font-family:'Liberation Sans', sans-serif;white-space:pre;">src</div>
<div style="position:absolute;left:549.9px;top:84.30px;height:22px;line-height:22px;font-size:15.4px;color:#a9a9a5;font-weight:normal;font-family:'Liberation Sans', sans-serif;white-space:pre;">components</div>
<svg style="position:absolute;left:658.0px;top:87.2px;" width="16" height="15" viewBox="0 0 16 15" fill="none"><g stroke="#519aba" stroke-width="1.25" fill="none"><ellipse cx="8" cy="7.5" rx="7.1" ry="3.1"/><ellipse cx="8" cy="7.5" rx="7.1" ry="3.1" transform="rotate(60 8 7.5)"/><ellipse cx="8" cy="7.5" rx="7.1" ry="3.1" transform="rotate(-60 8 7.5)"/></g></svg>
<div style="position:absolute;left:680.7px;top:84.80px;height:21px;line-height:21px;font-size:14.8px;color:#a9a9a5;font-weight:normal;font-family:'Liberation Sans', sans-serif;white-space:pre;">Hero.jsx</div>
<svg style="position:absolute;left:755px;top:87px;" width="17" height="17" viewBox="0 0 17 17" fill="none"><path d="M8.5 1L15.5 4.6v7.8L8.5 16 1.5 12.4V4.6z M1.5 4.6l7 3.6 7-3.6 M8.5 8.2V16" stroke="#b180d7" stroke-width="1.3" stroke-linejoin="round"/></svg>
<div style="position:absolute;left:777.6px;top:84.80px;height:21px;line-height:21px;font-size:15px;color:#a9a9a5;font-weight:normal;font-family:'Liberation Sans', sans-serif;white-space:pre;">Hero</div>
<div style="position:absolute;left:385px;top:107px;width:1396px;height:777px;overflow:hidden;">
<div style="position:absolute;left:81px;top:26.20px;width:1px;height:23.10px;background:#464741;"></div>
<div style="position:absolute;left:99px;top:26.20px;width:1px;height:23.10px;background:#464741;"></div>
<div style="position:absolute;left:117px;top:26.20px;width:1px;height:23.10px;background:#464741;"></div>
<div style="position:absolute;left:136px;top:26.20px;width:1px;height:23.10px;background:#464741;"></div>
<div style="position:absolute;left:154px;top:26.20px;width:1px;height:23.10px;background:#464741;"></div>
<div style="position:absolute;left:81px;top:49.00px;width:1px;height:23.10px;background:#464741;"></div>
<div style="position:absolute;left:99px;top:49.00px;width:1px;height:23.10px;background:#464741;"></div>
<div style="position:absolute;left:117px;top:49.00px;width:1px;height:23.10px;background:#464741;"></div>
<div style="position:absolute;left:136px;top:49.00px;width:1px;height:23.10px;background:#464741;"></div>
<div style="position:absolute;left:154px;top:49.00px;width:1px;height:23.10px;background:#464741;"></div>
<div style="position:absolute;left:173px;top:49.00px;width:1px;height:23.10px;background:#464741;"></div>
<div style="position:absolute;left:81px;top:71.80px;width:1px;height:23.10px;background:#464741;"></div>
<div style="position:absolute;left:99px;top:71.80px;width:1px;height:23.10px;background:#464741;"></div>
<div style="position:absolute;left:117px;top:71.80px;width:1px;height:23.10px;background:#464741;"></div>
<div style="position:absolute;left:136px;top:71.80px;width:1px;height:23.10px;background:#464741;"></div>
<div style="position:absolute;left:154px;top:71.80px;width:1px;height:23.10px;background:#464741;"></div>
<div style="position:absolute;left:173px;top:71.80px;width:1px;height:23.10px;background:#464741;"></div>
<div style="position:absolute;left:191px;top:71.80px;width:1px;height:23.10px;background:#464741;"></div>
<div style="position:absolute;left:81px;top:94.60px;width:1px;height:23.10px;background:#464741;"></div>
<div style="position:absolute;left:99px;top:94.60px;width:1px;height:23.10px;background:#464741;"></div>
<div style="position:absolute;left:117px;top:94.60px;width:1px;height:23.10px;background:#464741;"></div>
<div style="position:absolute;left:136px;top:94.60px;width:1px;height:23.10px;background:#464741;"></div>
<div style="position:absolute;left:154px;top:94.60px;width:1px;height:23.10px;background:#464741;"></div>
<div style="position:absolute;left:173px;top:94.60px;width:1px;height:23.10px;background:#464741;"></div>
<div style="position:absolute;left:191px;top:94.60px;width:1px;height:23.10px;background:#464741;"></div>
<div style="position:absolute;left:81px;top:117.40px;width:1px;height:23.10px;background:#464741;"></div>
<div style="position:absolute;left:99px;top:117.40px;width:1px;height:23.10px;background:#464741;"></div>
<div style="position:absolute;left:117px;top:117.40px;width:1px;height:23.10px;background:#464741;"></div>
<div style="position:absolute;left:136px;top:117.40px;width:1px;height:23.10px;background:#464741;"></div>
<div style="position:absolute;left:154px;top:117.40px;width:1px;height:23.10px;background:#464741;"></div>
<div style="position:absolute;left:173px;top:117.40px;width:1px;height:23.10px;background:#464741;"></div>
<div style="position:absolute;left:191px;top:117.40px;width:1px;height:23.10px;background:#464741;"></div>
<div style="position:absolute;left:81px;top:140.20px;width:1px;height:23.10px;background:#464741;"></div>
<div style="position:absolute;left:99px;top:140.20px;width:1px;height:23.10px;background:#464741;"></div>
<div style="position:absolute;left:117px;top:140.20px;width:1px;height:23.10px;background:#464741;"></div>
<div style="position:absolute;left:136px;top:140.20px;width:1px;height:23.10px;background:#464741;"></div>
<div style="position:absolute;left:154px;top:140.20px;width:1px;height:23.10px;background:#464741;"></div>
<div style="position:absolute;left:173px;top:140.20px;width:1px;height:23.10px;background:#464741;"></div>
<div style="position:absolute;left:191px;top:140.20px;width:1px;height:23.10px;background:#464741;"></div>
<div style="position:absolute;left:81px;top:163.00px;width:1px;height:23.10px;background:#464741;"></div>
<div style="position:absolute;left:99px;top:163.00px;width:1px;height:23.10px;background:#464741;"></div>
<div style="position:absolute;left:117px;top:163.00px;width:1px;height:23.10px;background:#464741;"></div>
<div style="position:absolute;left:136px;top:163.00px;width:1px;height:23.10px;background:#464741;"></div>
<div style="position:absolute;left:154px;top:163.00px;width:1px;height:23.10px;background:#464741;"></div>
<div style="position:absolute;left:173px;top:163.00px;width:1px;height:23.10px;background:#464741;"></div>
<div style="position:absolute;left:191px;top:163.00px;width:1px;height:23.10px;background:#464741;"></div>
<div style="position:absolute;left:81px;top:185.80px;width:1px;height:23.10px;background:#464741;"></div>
<div style="position:absolute;left:99px;top:185.80px;width:1px;height:23.10px;background:#464741;"></div>
<div style="position:absolute;left:117px;top:185.80px;width:1px;height:23.10px;background:#464741;"></div>
<div style="position:absolute;left:136px;top:185.80px;width:1px;height:23.10px;background:#464741;"></div>
<div style="position:absolute;left:154px;top:185.80px;width:1px;height:23.10px;background:#464741;"></div>
<div style="position:absolute;left:173px;top:185.80px;width:1px;height:23.10px;background:#464741;"></div>
<div style="position:absolute;left:81px;top:208.60px;width:1px;height:23.10px;background:#464741;"></div>
<div style="position:absolute;left:99px;top:208.60px;width:1px;height:23.10px;background:#464741;"></div>
<div style="position:absolute;left:117px;top:208.60px;width:1px;height:23.10px;background:#464741;"></div>
<div style="position:absolute;left:136px;top:208.60px;width:1px;height:23.10px;background:#464741;"></div>
<div style="position:absolute;left:154px;top:208.60px;width:1px;height:23.10px;background:#464741;"></div>
<div style="position:absolute;left:81px;top:231.40px;width:1px;height:23.10px;background:#464741;"></div>
<div style="position:absolute;left:99px;top:231.40px;width:1px;height:23.10px;background:#464741;"></div>
<div style="position:absolute;left:117px;top:231.40px;width:1px;height:23.10px;background:#464741;"></div>
<div style="position:absolute;left:136px;top:231.40px;width:1px;height:23.10px;background:#464741;"></div>
<div style="position:absolute;left:154px;top:231.40px;width:1px;height:23.10px;background:#464741;"></div>
<div style="position:absolute;left:81px;top:254.20px;width:1px;height:23.10px;background:#464741;"></div>
<div style="position:absolute;left:99px;top:254.20px;width:1px;height:23.10px;background:#464741;"></div>
<div style="position:absolute;left:117px;top:254.20px;width:1px;height:23.10px;background:#464741;"></div>
<div style="position:absolute;left:136px;top:254.20px;width:1px;height:23.10px;background:#464741;"></div>
<div style="position:absolute;left:81px;top:277.00px;width:1px;height:23.10px;background:#464741;"></div>
<div style="position:absolute;left:99px;top:277.00px;width:1px;height:23.10px;background:#464741;"></div>
<div style="position:absolute;left:117px;top:277.00px;width:1px;height:23.10px;background:#464741;"></div>
<div style="position:absolute;left:81px;top:299.80px;width:1px;height:23.10px;background:#464741;"></div>
<div style="position:absolute;left:99px;top:299.80px;width:1px;height:23.10px;background:#464741;"></div>
<div style="position:absolute;left:117px;top:299.80px;width:1px;height:23.10px;background:#464741;"></div>
<div style="position:absolute;left:81px;top:322.60px;width:1px;height:23.10px;background:#464741;"></div>
<div style="position:absolute;left:99px;top:322.60px;width:1px;height:23.10px;background:#464741;"></div>
<div style="position:absolute;left:117px;top:322.60px;width:1px;height:23.10px;background:#464741;"></div>
<div style="position:absolute;left:136px;top:322.60px;width:1px;height:23.10px;background:#464741;"></div>
<div style="position:absolute;left:81px;top:345.40px;width:1px;height:23.10px;background:#464741;"></div>
<div style="position:absolute;left:99px;top:345.40px;width:1px;height:23.10px;background:#464741;"></div>
<div style="position:absolute;left:117px;top:345.40px;width:1px;height:23.10px;background:#464741;"></div>
<div style="position:absolute;left:136px;top:345.40px;width:1px;height:23.10px;background:#464741;"></div>
<div style="position:absolute;left:154px;top:345.40px;width:1px;height:23.10px;background:#464741;"></div>
<div style="position:absolute;left:81px;top:368.20px;width:1px;height:23.10px;background:#464741;"></div>
<div style="position:absolute;left:99px;top:368.20px;width:1px;height:23.10px;background:#464741;"></div>
<div style="position:absolute;left:117px;top:368.20px;width:1px;height:23.10px;background:#464741;"></div>
<div style="position:absolute;left:136px;top:368.20px;width:1px;height:23.10px;background:#464741;"></div>
<div style="position:absolute;left:154px;top:368.20px;width:1px;height:23.10px;background:#464741;"></div>
<div style="position:absolute;left:81px;top:391.00px;width:1px;height:23.10px;background:#464741;"></div>
<div style="position:absolute;left:99px;top:391.00px;width:1px;height:23.10px;background:#464741;"></div>
<div style="position:absolute;left:117px;top:391.00px;width:1px;height:23.10px;background:#464741;"></div>
<div style="position:absolute;left:136px;top:391.00px;width:1px;height:23.10px;background:#464741;"></div>
<div style="position:absolute;left:154px;top:391.00px;width:1px;height:23.10px;background:#464741;"></div>
<div style="position:absolute;left:81px;top:413.80px;width:1px;height:23.10px;background:#464741;"></div>
<div style="position:absolute;left:99px;top:413.80px;width:1px;height:23.10px;background:#464741;"></div>
<div style="position:absolute;left:117px;top:413.80px;width:1px;height:23.10px;background:#464741;"></div>
<div style="position:absolute;left:136px;top:413.80px;width:1px;height:23.10px;background:#464741;"></div>
<div style="position:absolute;left:154px;top:413.80px;width:1px;height:23.10px;background:#464741;"></div>
<div style="position:absolute;left:81px;top:436.60px;width:1px;height:23.10px;background:#464741;"></div>
<div style="position:absolute;left:99px;top:436.60px;width:1px;height:23.10px;background:#464741;"></div>
<div style="position:absolute;left:117px;top:436.60px;width:1px;height:23.10px;background:#464741;"></div>
<div style="position:absolute;left:136px;top:436.60px;width:1px;height:23.10px;background:#464741;"></div>
<div style="position:absolute;left:154px;top:436.60px;width:1px;height:23.10px;background:#464741;"></div>
<div style="position:absolute;left:81px;top:459.40px;width:1px;height:23.10px;background:#464741;"></div>
<div style="position:absolute;left:99px;top:459.40px;width:1px;height:23.10px;background:#464741;"></div>
<div style="position:absolute;left:117px;top:459.40px;width:1px;height:23.10px;background:#464741;"></div>
<div style="position:absolute;left:136px;top:459.40px;width:1px;height:23.10px;background:#464741;"></div>
<div style="position:absolute;left:154px;top:459.40px;width:1px;height:23.10px;background:#464741;"></div>
<div style="position:absolute;left:81px;top:482.20px;width:1px;height:23.10px;background:#464741;"></div>
<div style="position:absolute;left:99px;top:482.20px;width:1px;height:23.10px;background:#464741;"></div>
<div style="position:absolute;left:117px;top:482.20px;width:1px;height:23.10px;background:#464741;"></div>
<div style="position:absolute;left:136px;top:482.20px;width:1px;height:23.10px;background:#464741;"></div>
<div style="position:absolute;left:81px;top:505.00px;width:1px;height:23.10px;background:#464741;"></div>
<div style="position:absolute;left:99px;top:505.00px;width:1px;height:23.10px;background:#464741;"></div>
<div style="position:absolute;left:117px;top:505.00px;width:1px;height:23.10px;background:#464741;"></div>
<div style="position:absolute;left:81px;top:527.80px;width:1px;height:23.10px;background:#464741;"></div>
<div style="position:absolute;left:99px;top:527.80px;width:1px;height:23.10px;background:#464741;"></div>
<div style="position:absolute;left:117px;top:527.80px;width:1px;height:23.10px;background:#464741;"></div>
<div style="position:absolute;left:136px;top:527.80px;width:1px;height:23.10px;background:#464741;"></div>
<div style="position:absolute;left:81px;top:550.60px;width:1px;height:23.10px;background:#464741;"></div>
<div style="position:absolute;left:99px;top:550.60px;width:1px;height:23.10px;background:#464741;"></div>
<div style="position:absolute;left:117px;top:550.60px;width:1px;height:23.10px;background:#464741;"></div>
<div style="position:absolute;left:136px;top:550.60px;width:1px;height:23.10px;background:#464741;"></div>
<div style="position:absolute;left:154px;top:550.60px;width:1px;height:23.10px;background:#464741;"></div>
<div style="position:absolute;left:81px;top:573.40px;width:1px;height:23.10px;background:#464741;"></div>
<div style="position:absolute;left:99px;top:573.40px;width:1px;height:23.10px;background:#464741;"></div>
<div style="position:absolute;left:117px;top:573.40px;width:1px;height:23.10px;background:#464741;"></div>
<div style="position:absolute;left:136px;top:573.40px;width:1px;height:23.10px;background:#464741;"></div>
<div style="position:absolute;left:81px;top:596.20px;width:1px;height:23.10px;background:#464741;"></div>
<div style="position:absolute;left:99px;top:596.20px;width:1px;height:23.10px;background:#464741;"></div>
<div style="position:absolute;left:117px;top:596.20px;width:1px;height:23.10px;background:#464741;"></div>
<div style="position:absolute;left:136px;top:596.20px;width:1px;height:23.10px;background:#464741;"></div>
<div style="position:absolute;left:81px;top:619.00px;width:1px;height:23.10px;background:#464741;"></div>
<div style="position:absolute;left:99px;top:619.00px;width:1px;height:23.10px;background:#464741;"></div>
<div style="position:absolute;left:117px;top:619.00px;width:1px;height:23.10px;background:#464741;"></div>
<div style="position:absolute;left:136px;top:619.00px;width:1px;height:23.10px;background:#464741;"></div>
<div style="position:absolute;left:154px;top:619.00px;width:1px;height:23.10px;background:#464741;"></div>
<div style="position:absolute;left:81px;top:641.80px;width:1px;height:23.10px;background:#464741;"></div>
<div style="position:absolute;left:99px;top:641.80px;width:1px;height:23.10px;background:#464741;"></div>
<div style="position:absolute;left:117px;top:641.80px;width:1px;height:23.10px;background:#464741;"></div>
<div style="position:absolute;left:136px;top:641.80px;width:1px;height:23.10px;background:#464741;"></div>
<div style="position:absolute;left:81px;top:664.60px;width:1px;height:23.10px;background:#464741;"></div>
<div style="position:absolute;left:99px;top:664.60px;width:1px;height:23.10px;background:#464741;"></div>
<div style="position:absolute;left:117px;top:664.60px;width:1px;height:23.10px;background:#464741;"></div>
<div style="position:absolute;left:136px;top:664.60px;width:1px;height:23.10px;background:#464741;"></div>
<div style="position:absolute;left:81px;top:687.40px;width:1px;height:23.10px;background:#464741;"></div>
<div style="position:absolute;left:99px;top:687.40px;width:1px;height:23.10px;background:#464741;"></div>
<div style="position:absolute;left:117px;top:687.40px;width:1px;height:23.10px;background:#464741;"></div>
<div style="position:absolute;left:136px;top:687.40px;width:1px;height:23.10px;background:#464741;"></div>
<div style="position:absolute;left:154px;top:687.40px;width:1px;height:23.10px;background:#464741;"></div>
<div style="position:absolute;left:81px;top:710.20px;width:1px;height:23.10px;background:#464741;"></div>
<div style="position:absolute;left:99px;top:710.20px;width:1px;height:23.10px;background:#464741;"></div>
<div style="position:absolute;left:117px;top:710.20px;width:1px;height:23.10px;background:#464741;"></div>
<div style="position:absolute;left:136px;top:710.20px;width:1px;height:23.10px;background:#464741;"></div>
<div style="position:absolute;left:154px;top:710.20px;width:1px;height:23.10px;background:#464741;"></div>
<div style="position:absolute;left:173px;top:710.20px;width:1px;height:23.10px;background:#464741;"></div>
<div style="position:absolute;left:81px;top:733.00px;width:1px;height:23.10px;background:#464741;"></div>
<div style="position:absolute;left:99px;top:733.00px;width:1px;height:23.10px;background:#464741;"></div>
<div style="position:absolute;left:117px;top:733.00px;width:1px;height:23.10px;background:#464741;"></div>
<div style="position:absolute;left:136px;top:733.00px;width:1px;height:23.10px;background:#464741;"></div>
<div style="position:absolute;left:154px;top:733.00px;width:1px;height:23.10px;background:#464741;"></div>
<div style="position:absolute;left:81px;top:755.80px;width:1px;height:23.10px;background:#464741;"></div>
<div style="position:absolute;left:99px;top:755.80px;width:1px;height:23.10px;background:#464741;"></div>
<div style="position:absolute;left:117px;top:755.80px;width:1px;height:23.10px;background:#464741;"></div>
<div style="position:absolute;left:136px;top:755.80px;width:1px;height:23.10px;background:#464741;"></div>
<div style="position:absolute;left:154px;top:755.80px;width:1px;height:23.10px;background:#464741;"></div>
<div class="code" style="position:absolute;left:81px;top:28.30px;height:22.8px;line-height:22.8px;font-size:16px;"><span style="color:#f8f8f2;">          background: </span><span style="color:#e6db74;">`</span></div>
<div class="code" style="position:absolute;left:0px;width:50px;text-align:right;top:28.30px;height:22.8px;line-height:22.8px;font-size:16px;color:#90908a;">22</div>
<div class="code" style="position:absolute;left:81px;top:51.10px;height:22.8px;line-height:22.8px;font-size:16px;"><span style="color:#e6db74;">            linear-gradient(</span></div>
<div class="code" style="position:absolute;left:0px;width:50px;text-align:right;top:51.10px;height:22.8px;line-height:22.8px;font-size:16px;color:#90908a;">23</div>
<div class="code" style="position:absolute;left:81px;top:73.90px;height:22.8px;line-height:22.8px;font-size:16px;"><span style="color:#e6db74;">              to top,</span></div>
<div class="code" style="position:absolute;left:0px;width:50px;text-align:right;top:73.90px;height:22.8px;line-height:22.8px;font-size:16px;color:#90908a;">24</div>
<div class="code" style="position:absolute;left:81px;top:96.70px;height:22.8px;line-height:22.8px;font-size:16px;"><span style="color:#f8f8f2;">              </span><span style="display:inline-block;width:21.5px;height:10px;position:relative;"><span style="position:absolute;left:3.7px;top:-3.5px;width:11px;height:12px;border:1px solid #fff;background:transparent;"></span></span><span style="color:#e6db74;">rgba(0,0,0,0) 0%,</span></div>
<div class="code" style="position:absolute;left:0px;width:50px;text-align:right;top:96.70px;height:22.8px;line-height:22.8px;font-size:16px;color:#90908a;">25</div>
<div class="code" style="position:absolute;left:81px;top:119.50px;height:22.8px;line-height:22.8px;font-size:16px;"><span style="color:#f8f8f2;">              </span><span style="display:inline-block;width:21.5px;height:10px;position:relative;"><span style="position:absolute;left:3.7px;top:-3.5px;width:11px;height:12px;border:1px solid #fff;background:#080807;"></span></span><span style="color:#e6db74;">rgba(0,0,0,0.8) 45%,</span></div>
<div class="code" style="position:absolute;left:0px;width:50px;text-align:right;top:119.50px;height:22.8px;line-height:22.8px;font-size:16px;color:#90908a;">26</div>
<div class="code" style="position:absolute;left:81px;top:142.30px;height:22.8px;line-height:22.8px;font-size:16px;"><span style="color:#f8f8f2;">              </span><span style="display:inline-block;width:21.5px;height:10px;position:relative;"><span style="position:absolute;left:3.7px;top:-3.5px;width:11px;height:12px;border:1px solid #fff;background:#080807;"></span></span><span style="color:#e6db74;">rgba(0, 0, 0, 0.8) 60%,</span></div>
<div class="code" style="position:absolute;left:0px;width:50px;text-align:right;top:142.30px;height:22.8px;line-height:22.8px;font-size:16px;color:#90908a;">27</div>
<div class="code" style="position:absolute;left:81px;top:165.10px;height:22.8px;line-height:22.8px;font-size:16px;"><span style="color:#f8f8f2;">              </span><span style="display:inline-block;width:21.5px;height:10px;position:relative;"><span style="position:absolute;left:3.7px;top:-3.5px;width:11px;height:12px;border:1px solid #fff;background:transparent;"></span></span><span style="color:#e6db74;">rgba(0,0,0,0) 100%</span></div>
<div class="code" style="position:absolute;left:0px;width:50px;text-align:right;top:165.10px;height:22.8px;line-height:22.8px;font-size:16px;color:#90908a;">28</div>
<div class="code" style="position:absolute;left:81px;top:187.90px;height:22.8px;line-height:22.8px;font-size:16px;"><span style="color:#e6db74;">            )</span></div>
<div class="code" style="position:absolute;left:0px;width:50px;text-align:right;top:187.90px;height:22.8px;line-height:22.8px;font-size:16px;color:#90908a;">29</div>
<div class="code" style="position:absolute;left:81px;top:210.70px;height:22.8px;line-height:22.8px;font-size:16px;"><span style="color:#f8f8f2;">          </span><span style="color:#e6db74;">`</span><span style="color:#f8f8f2;">,</span></div>
<div class="code" style="position:absolute;left:0px;width:50px;text-align:right;top:210.70px;height:22.8px;line-height:22.8px;font-size:16px;color:#90908a;">30</div>
<div class="code" style="position:absolute;left:81px;top:233.50px;height:22.8px;line-height:22.8px;font-size:16px;"><span style="color:#f8f8f2;">          zIndex: </span><span style="color:#ae81ff;">1</span><span style="color:#f8f8f2;">,</span></div>
<div class="code" style="position:absolute;left:0px;width:50px;text-align:right;top:233.50px;height:22.8px;line-height:22.8px;font-size:16px;color:#90908a;">31</div>
<div class="code" style="position:absolute;left:81px;top:256.30px;height:22.8px;line-height:22.8px;font-size:16px;"><span style="color:#f8f8f2;">        </span><span style="color:#ffd700;">}</span><span style="color:#179fff;">}</span></div>
<div class="code" style="position:absolute;left:0px;width:50px;text-align:right;top:256.30px;height:22.8px;line-height:22.8px;font-size:16px;color:#90908a;">32</div>
<div class="code" style="position:absolute;left:81px;top:279.10px;height:22.8px;line-height:22.8px;font-size:16px;"><span style="color:#f8f8f2;">      /&gt;</span></div>
<div class="code" style="position:absolute;left:0px;width:50px;text-align:right;top:279.10px;height:22.8px;line-height:22.8px;font-size:16px;color:#90908a;">33</div>
<div class="code" style="position:absolute;left:81px;top:301.90px;height:22.8px;line-height:22.8px;font-size:16px;"><span style="color:#f8f8f2;">      &lt;</span><span style="color:#66d9ef;font-style:italic;">Box</span></div>
<div class="code" style="position:absolute;left:0px;width:50px;text-align:right;top:301.90px;height:22.8px;line-height:22.8px;font-size:16px;color:#90908a;">34</div>
<div class="code" style="position:absolute;left:81px;top:324.70px;height:22.8px;line-height:22.8px;font-size:16px;"><span style="color:#f8f8f2;">        </span><span style="color:#a6e22e;">sx</span><span style="color:#f92672;">=</span><span style="color:#179fff;">{</span><span style="color:#ffd700;">{</span></div>
<div class="code" style="position:absolute;left:0px;width:50px;text-align:right;top:324.70px;height:22.8px;line-height:22.8px;font-size:16px;color:#90908a;">35</div>
<div class="code" style="position:absolute;left:81px;top:347.50px;height:22.8px;line-height:22.8px;font-size:16px;"><span style="color:#f8f8f2;">          color: </span><span style="color:#e6db74;">&#x27;#edcbb1&#x27;</span><span style="color:#f8f8f2;">,</span></div>
<div class="code" style="position:absolute;left:0px;width:50px;text-align:right;top:347.50px;height:22.8px;line-height:22.8px;font-size:16px;color:#90908a;">36</div>
<div class="code" style="position:absolute;left:81px;top:370.30px;height:22.8px;line-height:22.8px;font-size:16px;"><span style="color:#f8f8f2;">          textShadow: </span><span style="color:#e6db74;">&#x27;2px 2px 4px </span><span style="display:inline-block;width:21.5px;height:10px;position:relative;"><span style="position:absolute;left:3.7px;top:-3.5px;width:11px;height:12px;border:1px solid #fff;background:#141411;"></span></span><span style="color:#e6db74;">rgba(0, 0, 0, 0.5)&#x27;</span><span style="color:#f8f8f2;">,</span></div>
<div class="code" style="position:absolute;left:0px;width:50px;text-align:right;top:370.30px;height:22.8px;line-height:22.8px;font-size:16px;color:#90908a;">37</div>
<div class="code" style="position:absolute;left:81px;top:393.10px;height:22.8px;line-height:22.8px;font-size:16px;"><span style="color:#f8f8f2;">          width: </span><span style="color:#e6db74;">&#x27;70%&#x27;</span><span style="color:#f8f8f2;">,</span></div>
<div class="code" style="position:absolute;left:0px;width:50px;text-align:right;top:393.10px;height:22.8px;line-height:22.8px;font-size:16px;color:#90908a;">38</div>
<div class="code" style="position:absolute;left:81px;top:415.90px;height:22.8px;line-height:22.8px;font-size:16px;"><span style="color:#f8f8f2;">          padding: </span><span style="color:#e6db74;">&#x27;20px&#x27;</span><span style="color:#f8f8f2;">,</span></div>
<div class="code" style="position:absolute;left:0px;width:50px;text-align:right;top:415.90px;height:22.8px;line-height:22.8px;font-size:16px;color:#90908a;">39</div>
<div class="code" style="position:absolute;left:81px;top:438.70px;height:22.8px;line-height:22.8px;font-size:16px;"><span style="color:#f8f8f2;">          position: </span><span style="color:#e6db74;">&#x27;relative&#x27;</span><span style="color:#f8f8f2;">,</span></div>
<div class="code" style="position:absolute;left:0px;width:50px;text-align:right;top:438.70px;height:22.8px;line-height:22.8px;font-size:16px;color:#90908a;">40</div>
<div class="code" style="position:absolute;left:81px;top:461.50px;height:22.8px;line-height:22.8px;font-size:16px;"><span style="color:#f8f8f2;">          zIndex: </span><span style="color:#ae81ff;">2</span><span style="color:#f8f8f2;">,</span></div>
<div class="code" style="position:absolute;left:0px;width:50px;text-align:right;top:461.50px;height:22.8px;line-height:22.8px;font-size:16px;color:#90908a;">41</div>
<div class="code" style="position:absolute;left:81px;top:484.30px;height:22.8px;line-height:22.8px;font-size:16px;"><span style="color:#f8f8f2;">        </span><span style="color:#ffd700;">}</span><span style="color:#179fff;">}</span></div>
<div class="code" style="position:absolute;left:0px;width:50px;text-align:right;top:484.30px;height:22.8px;line-height:22.8px;font-size:16px;color:#90908a;">42</div>
<div class="code" style="position:absolute;left:81px;top:507.10px;height:22.8px;line-height:22.8px;font-size:16px;"><span style="color:#f8f8f2;">      &gt;</span></div>
<div class="code" style="position:absolute;left:0px;width:50px;text-align:right;top:507.10px;height:22.8px;line-height:22.8px;font-size:16px;color:#90908a;">43</div>
<div class="code" style="position:absolute;left:81px;top:529.90px;height:22.8px;line-height:22.8px;font-size:16px;"><span style="color:#f8f8f2;">        &lt;</span><span style="color:#66d9ef;font-style:italic;">Typography</span><span style="color:#f8f8f2;"> </span><span style="color:#a6e22e;">variant</span><span style="color:#f92672;">=</span><span style="color:#e6db74;">&quot;h1&quot;</span><span style="color:#f8f8f2;"> </span><span style="color:#a6e22e;">sx</span><span style="color:#f92672;">=</span><span style="color:#179fff;">{</span><span style="color:#ffd700;">{</span><span style="color:#f8f8f2;"> mb: </span><span style="color:#ae81ff;">2</span><span style="color:#f8f8f2;">, fontFamily: </span><span style="color:#e6db74;">&#x27;Blackcraft, Arial, sans-serif&#x27;</span><span style="color:#f8f8f2;">, fontSize: </span><span style="color:#e6db74;">&#x27;8rem&#x27;</span><span style="color:#f8f8f2;"> </span><span style="color:#ffd700;">}</span><span style="color:#179fff;">}</span><span style="color:#f8f8f2;">&gt;</span></div>
<div class="code" style="position:absolute;left:0px;width:50px;text-align:right;top:529.90px;height:22.8px;line-height:22.8px;font-size:16px;color:#90908a;">44</div>
<div class="code" style="position:absolute;left:81px;top:552.70px;height:22.8px;line-height:22.8px;font-size:16px;"><span style="color:#f8f8f2;">          7 Corrupting Sins</span></div>
<div class="code" style="position:absolute;left:0px;width:50px;text-align:right;top:552.70px;height:22.8px;line-height:22.8px;font-size:16px;color:#90908a;">45</div>
<div class="code" style="position:absolute;left:81px;top:575.50px;height:22.8px;line-height:22.8px;font-size:16px;"><span style="color:#f8f8f2;">        &lt;/</span><span style="color:#66d9ef;font-style:italic;">Typography</span><span style="color:#f8f8f2;">&gt;</span></div>
<div class="code" style="position:absolute;left:0px;width:50px;text-align:right;top:575.50px;height:22.8px;line-height:22.8px;font-size:16px;color:#90908a;">46</div>
<div class="code" style="position:absolute;left:81px;top:598.30px;height:22.8px;line-height:22.8px;font-size:16px;"><span style="color:#f8f8f2;">        &lt;</span><span style="color:#66d9ef;font-style:italic;">Typography</span><span style="color:#f8f8f2;"> </span><span style="color:#a6e22e;">variant</span><span style="color:#f92672;">=</span><span style="color:#e6db74;">&quot;h5&quot;</span><span style="color:#f8f8f2;"> </span><span style="color:#a6e22e;">sx</span><span style="color:#f92672;">=</span><span style="color:#179fff;">{</span><span style="color:#ffd700;">{</span><span style="color:#f8f8f2;"> mb: </span><span style="color:#ae81ff;">4</span><span style="color:#f8f8f2;"> </span><span style="color:#ffd700;">}</span><span style="color:#179fff;">}</span><span style="color:#f8f8f2;">&gt;</span></div>
<div class="code" style="position:absolute;left:0px;width:50px;text-align:right;top:598.30px;height:22.8px;line-height:22.8px;font-size:16px;color:#90908a;">47</div>
<div class="code" style="position:absolute;left:81px;top:621.10px;height:22.8px;line-height:22.8px;font-size:16px;"><span style="color:#f8f8f2;">          Embrace the Darkness. Confront the Sins.</span></div>
<div class="code" style="position:absolute;left:0px;width:50px;text-align:right;top:621.10px;height:22.8px;line-height:22.8px;font-size:16px;color:#90908a;">48</div>
<div class="code" style="position:absolute;left:81px;top:643.90px;height:22.8px;line-height:22.8px;font-size:16px;"><span style="color:#f8f8f2;">        &lt;/</span><span style="color:#66d9ef;font-style:italic;">Typography</span><span style="color:#f8f8f2;">&gt;</span></div>
<div class="code" style="position:absolute;left:0px;width:50px;text-align:right;top:643.90px;height:22.8px;line-height:22.8px;font-size:16px;color:#90908a;">49</div>
<div class="code" style="position:absolute;left:81px;top:666.70px;height:22.8px;line-height:22.8px;font-size:16px;"><span style="color:#f8f8f2;">        &lt;</span><span style="color:#66d9ef;font-style:italic;">Stack</span><span style="color:#f8f8f2;"> </span><span style="color:#a6e22e;">direction</span><span style="color:#f92672;">=</span><span style="color:#e6db74;">&quot;row&quot;</span><span style="color:#f8f8f2;"> </span><span style="color:#a6e22e;">spacing</span><span style="color:#f92672;">=</span><span style="color:#179fff;">{</span><span style="color:#ae81ff;">2</span><span style="color:#179fff;">}</span><span style="color:#f8f8f2;"> </span><span style="color:#a6e22e;">justifyContent</span><span style="color:#f92672;">=</span><span style="color:#e6db74;">&quot;center&quot;</span><span style="color:#f8f8f2;">&gt;</span></div>
<div class="code" style="position:absolute;left:0px;width:50px;text-align:right;top:666.70px;height:22.8px;line-height:22.8px;font-size:16px;color:#90908a;">50</div>
<div class="code" style="position:absolute;left:81px;top:689.50px;height:22.8px;line-height:22.8px;font-size:16px;"><span style="color:#f8f8f2;">          &lt;</span><span style="color:#66d9ef;font-style:italic;">Button</span><span style="color:#f8f8f2;"> </span><span style="color:#a6e22e;">variant</span><span style="color:#f92672;">=</span><span style="color:#e6db74;">&quot;contained&quot;</span><span style="color:#f8f8f2;">&gt;</span></div>
<div class="code" style="position:absolute;left:0px;width:50px;text-align:right;top:689.50px;height:22.8px;line-height:22.8px;font-size:16px;color:#90908a;">51</div>
<div class="code" style="position:absolute;left:81px;top:712.30px;height:22.8px;line-height:22.8px;font-size:16px;"><span style="color:#f8f8f2;">            Pre-Register</span></div>
<div class="code" style="position:absolute;left:0px;width:50px;text-align:right;top:712.30px;height:22.8px;line-height:22.8px;font-size:16px;color:#90908a;">52</div>
<div class="code" style="position:absolute;left:81px;top:735.10px;height:22.8px;line-height:22.8px;font-size:16px;"><span style="color:#f8f8f2;">          &lt;/</span><span style="color:#66d9ef;font-style:italic;">Button</span><span style="color:#f8f8f2;">&gt;</span></div>
<div class="code" style="position:absolute;left:0px;width:50px;text-align:right;top:735.10px;height:22.8px;line-height:22.8px;font-size:16px;color:#90908a;">53</div>
<div class="code" style="position:absolute;left:81px;top:757.90px;height:22.8px;line-height:22.8px;font-size:16px;"><span style="color:#f8f8f2;">          &lt;</span><span style="color:#66d9ef;font-style:italic;">Button</span><span style="color:#f8f8f2;"> </span><span style="color:#a6e22e;">variant</span><span style="color:#f92672;">=</span><span style="color:#e6db74;">&quot;contained&quot;</span><span style="color:#f8f8f2;">&gt;</span></div>
<div class="code" style="position:absolute;left:0px;width:50px;text-align:right;top:757.90px;height:22.8px;line-height:22.8px;font-size:16px;color:#90908a;">54</div>
</div>
<div style="position:absolute;left:385px;top:107px;width:1396px;height:23px;background:#272822;"></div>
<div class="code" style="position:absolute;left:0px;width:435px;text-align:right;top:109.10px;height:22.8px;line-height:22.8px;font-size:16px;color:#90908a;">3</div>
<div class="code" style="position:absolute;left:466px;top:109.10px;height:22.8px;line-height:22.8px;font-size:16px;"><span style="color:#66d9ef;font-style:italic">function</span> <span style="color:#a6e22e">Hero</span><span style="color:#ffd700">()</span> <span style="color:#ffd700">{</span></div>
<div style="position:absolute;left:385px;top:130px;width:1396px;height:4px;background:linear-gradient(#000 0,#000 1.5px,rgba(0,0,0,0));"></div>
<div style="position:absolute;left:1900px;top:107px;width:1px;height:777px;background:#3a3b35;"></div>
<div style="position:absolute;left:1900px;top:269px;width:7px;height:274px;background:#484943;"></div>
<div style="position:absolute;left:1900px;top:155px;width:7px;height:2px;background:#c8c8c8;"></div>
<div style="position:absolute;left:408.6px;top:897.90px;height:17px;line-height:17px;font-size:11.8px;color:#9d9d98;font-weight:normal;font-family:'Liberation Sans', sans-serif;white-space:pre;">PROBLEMS</div>
<div style="position:absolute;left:502px;top:897.90px;height:17px;line-height:17px;font-size:11.8px;color:#9d9d98;font-weight:normal;font-family:'Liberation Sans', sans-serif;white-space:pre;">OUTPUT</div>
<div style="position:absolute;left:580px;top:897.90px;height:17px;line-height:17px;font-size:11.8px;color:#9d9d98;font-weight:normal;font-family:'Liberation Sans', sans-serif;white-space:pre;">DEBUG CONSOLE</div>
<div style="position:absolute;left:711.2px;top:897.90px;height:17px;line-height:17px;font-size:11.8px;color:#f8f8f2;font-weight:normal;font-family:'Liberation Sans', sans-serif;white-space:pre;">TERMINAL</div>
<div style="position:absolute;left:802px;top:897.90px;height:17px;line-height:17px;font-size:11.8px;color:#9d9d98;font-weight:normal;font-family:'Liberation Sans', sans-serif;white-space:pre;">PORTS</div>
<div style="position:absolute;left:709px;top:917px;width:66px;height:1px;background:#75715e;"></div>
<svg style="position:absolute;left:1640px;top:895px;" width="22" height="20" viewBox="0 0 22 20" fill="none"><path d="M3.5 2.5h17l-2.5 15h-17z" stroke="#cccccc" stroke-width="1.3" stroke-linejoin="round"/><path d="M6.5 6.5l3.5 3-3.5 3M10 13.5h5" stroke="#cccccc" stroke-width="1.3"/></svg>
<div style="position:absolute;left:1665.2px;top:896.40px;height:18px;line-height:18px;font-size:13.2px;color:#cccccc;font-weight:normal;font-family:'Liberation Sans', sans-serif;white-space:pre;">esbuild</div>
<svg style="position:absolute;left:1716px;top:896px;" width="19" height="19" viewBox="0 0 19 19" fill="none"><path d="M9.5 1.5v16M1.5 9.5h16" stroke="#cccccc" stroke-width="1.4"/></svg>
<svg style="position:absolute;left:1739px;top:901px;" width="11" height="8" viewBox="0 0 11 8" fill="none"><path d="M1 1.5l4.5 4.5L10 1.5" stroke="#cccccc" stroke-width="1.2"/></svg>
<svg style="position:absolute;left:1762px;top:896px;" width="19" height="19" viewBox="0 0 19 19" fill="none"><rect x="1.5" y="1.5" width="16" height="16" rx="1.5" stroke="#cccccc" stroke-width="1.3"/><path d="M9.5 1.5v16" stroke="#cccccc" stroke-width="1.3"/></svg>
<svg style="position:absolute;left:1791px;top:895px;" width="16" height="19" viewBox="0 0 16 19" fill="none"><path d="M1 4h14M5.5 4V2h5v2M3 4l1 14h8l1-14M6.3 7v8M9.7 7v8" stroke="#cccccc" stroke-width="1.3"/></svg>
<svg style="position:absolute;left:1820px;top:903px;" width="17" height="4" viewBox="0 0 17 4" fill="none"><circle cx="2" cy="2" r="1.4" fill="#cccccc"/><circle cx="8.5" cy="2" r="1.4" fill="#cccccc"/><circle cx="15" cy="2" r="1.4" fill="#cccccc"/></svg>
<svg style="position:absolute;left:1851px;top:898px;" width="14" height="9" viewBox="0 0 14 9" fill="none"><path d="M1 7.5l6-6 6 6" stroke="#cccccc" stroke-width="1.4"/></svg>
<svg style="position:absolute;left:1883px;top:899px;" width="12" height="12" viewBox="0 0 12 12" fill="none"><path d="M.8.8l10.4 10.4M11.2.8L.8 11.2" stroke="#cccccc" stroke-width="1.3"/></svg>
<div style="position:absolute;left:408.6px;top:943px;height:21px;line-height:21px;font-size:15px;font-family:'Liberation Mono', monospace;white-space:pre;color:#8f908a;">11:35:12 pm <span style="color:#66d9ef;font-weight:bold">[vite]</span> <span style="color:#4f4f4a">(client)</span> <span style="color:#a6e22e">hmr update </span>/src/components/Factions.jsx <span style="color:#d5cb6a">(x11)</span></div>
<div style="position:absolute;left:409px;top:962px;width:7px;height:19px;border:1px solid #d8d8d8;"></div>
<div style="position:absolute;left:0px;top:1004px;width:38px;height:23px;background:#ac6218;"></div>
<svg style="position:absolute;left:10.5px;top:1006.6px;" width="20" height="17" viewBox="0 0 20 17" fill="none"><path d="M3 14l5.5-5.5M8.5 8.5L3 3" stroke="#fff" stroke-width="0"/><path d="M11.5 1.5L6.5 6.5l5 5" stroke="#ffffff" stroke-width="1.4" fill="none"/><path d="M2.5 8.8l4.5 4.5-4.5 4.5" stroke="#ffffff" stroke-width="1.4" fill="none" transform="translate(0,-2.5)"/></svg>
<svg style="position:absolute;left:47.5px;top:1006.8px;" width="17" height="17" viewBox="0 0 17 17" fill="none"><circle cx="8.5" cy="8.5" r="7.3" stroke="#f8f8f2" stroke-width="1.3"/><path d="M5.7 5.7l5.6 5.6M11.3 5.7l-5.6 5.6" stroke="#f8f8f2" stroke-width="1.3"/></svg>
<div style="position:absolute;left:68.6px;top:1008.90px;height:18px;line-height:18px;font-size:13px;color:#f8f8f2;font-weight:normal;font-family:'Liberation Sans', sans-serif;white-space:pre;">0</div>
<svg style="position:absolute;left:80.5px;top:1006.4px;" width="17" height="16" viewBox="0 0 17 16" fill="none"><path d="M8.5 1.2L15.8 14.8H1.2z" stroke="#f8f8f2" stroke-width="1.3" stroke-linejoin="round"/><path d="M8.5 5.5v5.2M8.5 11.8v1.6" stroke="#f8f8f2" stroke-width="1.3"/></svg>
<div style="position:absolute;left:100.8px;top:1008.90px;height:18px;line-height:18px;font-size:13px;color:#f8f8f2;font-weight:normal;font-family:'Liberation Sans', sans-serif;white-space:pre;">0</div>
<svg style="position:absolute;left:126.5px;top:1008.7px;" width="17.5" height="17.5" viewBox="0 0 24 24" fill="none"><path fill="#f8f8f2" d="M10.94 13.5l-1.32 1.32a3.73 3.73 0 0 0-7.24 0L1.06 13.5 0 14.56l1.72 1.72-.22.22V18H0v1.5h1.5v.08c.077.489.214.966.41 1.42L0 22.94 1.06 24l1.65-1.65A4.308 4.308 0 0 0 6 24a4.31 4.31 0 0 0 3.29-1.65L10.94 24 12 22.94 10.090 21c.198-.464.336-.951.41-1.45v-.1H12V18h-1.5v-1.5l-.22-.22L12 14.56l-1.06-1.06zM6 13.5a2.25 2.25 0 0 1 2.25 2.25h-4.5A2.25 2.25 0 0 1 6 13.5zm3 6a3.33 3.33 0 0 1-3 3 3.33 3.33 0 0 1-3-3v-2.25h6v2.25zm14.76-9.9v1.26L13.5 17.37V15.6l8.5-5.37L9 2v9.46a5.07 5.07 0 0 0-1.5-.72V.63L8.64 0l15.12 9.6z"/></svg>
<div style="position:absolute;left:1386px;top:1004px;width:41px;height:23px;background:#272822;"></div>
<svg style="position:absolute;left:1397px;top:1007px;" width="18" height="18" viewBox="0 0 18 18" fill="none"><circle cx="7" cy="7" r="5.6" stroke="#f8f8f2" stroke-width="1.4"/><path d="M11 11l5.5 5.5M7 4.2v5.6M4.2 7h5.6" stroke="#f8f8f2" stroke-width="1.4"/></svg>
<div style="position:absolute;left:1436.7px;top:1007.90px;height:19px;line-height:19px;font-size:13.6px;color:#f8f8f2;font-weight:normal;font-family:'Liberation Sans', sans-serif;white-space:pre;">Ln 7, Col 30</div>
<div style="position:absolute;left:1529.3px;top:1007.90px;height:19px;line-height:19px;font-size:13.6px;color:#f8f8f2;font-weight:normal;font-family:'Liberation Sans', sans-serif;white-space:pre;">Spaces: 2</div>
<div style="position:absolute;left:1607.2px;top:1007.90px;height:19px;line-height:19px;font-size:13.4px;color:#f8f8f2;font-weight:normal;font-family:'Liberation Sans', sans-serif;white-space:pre;">UTF-8</div>
<div style="position:absolute;left:1664.7px;top:1007.90px;height:19px;line-height:19px;font-size:13.6px;color:#f8f8f2;font-weight:normal;font-family:'Liberation Sans', sans-serif;white-space:pre;">CRLF</div>
<div style="position:absolute;left:1739.3px;top:1008.40px;height:18px;line-height:18px;font-size:12.9px;color:#f8f8f2;font-weight:normal;font-family:'Liberation Sans', sans-serif;white-space:pre;">JavaScript JSX</div>
<div style="position:absolute;left:1716.6px;top:1006.50px;height:18px;line-height:18px;font-size:13px;color:#f8f8f2;font-weight:normal;font-family:'Liberation Sans', sans-serif;white-space:pre;letter-spacing:-1px;">{ }</div>
<svg style="position:absolute;left:1845px;top:1008.5px;" width="19.36" height="16.72" viewBox="0 0 19.36 16.72" fill="none"><g transform="scale(0.88)"><path d="M3.6 5.3C3.3 2.3 5.3.6 7.6.9c1.5.2 2.5 1 2.9 2 .4-1 1.4-1.8 2.9-2 2.3-.3 4.3 1.4 4 4.4 1.6.6 2.6 1.7 2.6 3.2v3.3c0 1-.6 1.8-1.6 2.4C16.5 16.2 13.700 17.300 10.5 17.300S4.5 16.2 2.6 14.2C1.6 13.6 1 12.8 1 11.8V8.500c0-1.5 1-2.6 2.600-3.200z" fill="#f8f8f2"/><ellipse cx="7.6" cy="4.9" rx="2.2" ry="2.2" fill="#414339"/><ellipse cx="13.4" cy="4.9" rx="2.2" ry="2.2" fill="#414339"/><rect x="4.6" y="9" width="11.8" height="6.2" rx="2" fill="#414339"/><rect x="7.7" y="10.2" width="1.5" height="3.8" rx=".5" fill="#f8f8f2"/><rect x="11.8" y="10.2" width="1.5" height="3.8" rx=".5" fill="#f8f8f2"/></g></svg>
<svg style="position:absolute;left:1883px;top:1007px;" width="16" height="17" viewBox="0 0 16 17" fill="none"><path d="M8 1.5c-3 0-4.8 2.2-4.8 5v3.8L1.5 13h13l-1.7-2.7V6.5c0-2.8-1.8-5-4.8-5z" stroke="#f8f8f2" stroke-width="1.3" stroke-linejoin="round"/><path d="M6 14.5c.3 1 1 1.6 2 1.6s1.7-.6 2-1.6" stroke="#f8f8f2" stroke-width="1.3"/></svg>
<div style="position:absolute;left:1789px;top:108px;width:6px;height:1px;background:#f92672;opacity:.62"></div><div style="position:absolute;left:1796px;top:108px;width:1px;height:1px;background:#f8f8f2;opacity:.62"></div><div style="position:absolute;left:1798px;top:108px;width:4px;height:1px;background:#f8f8f2;opacity:.62"></div><div style="position:absolute;left:1803px;top:108px;width:11px;height:1px;background:#f8f8f2;opacity:.62"></div><div style="position:absolute;left:1815px;top:108px;width:7px;height:1px;background:#f8f8f2;opacity:.62"></div><div style="position:absolute;left:1823px;top:108px;width:5px;height:1px;background:#f8f8f2;opacity:.62"></div><div style="position:absolute;left:1829px;top:108px;width:1px;height:1px;background:#f8f8f2;opacity:.62"></div><div style="position:absolute;left:1831px;top:108px;width:4px;height:1px;background:#f92672;opacity:.62"></div><div style="position:absolute;left:1836px;top:108px;width:15px;height:1px;background:#e6db74;opacity:.62"></div><div style="position:absolute;left:1851px;top:108px;width:1px;height:1px;background:#f8f8f2;opacity:.62"></div><div style="position:absolute;left:1789px;top:112px;width:8px;height:1px;background:#66d9ef;opacity:.62"></div><div style="position:absolute;left:1798px;top:112px;width:4px;height:1px;background:#a6e22e;opacity:.62"></div><div style="position:absolute;left:1802px;top:112px;width:2px;height:1px;background:#f8f8f2;opacity:.62"></div><div style="position:absolute;left:1805px;top:112px;width:1px;height:1px;background:#f8f8f2;opacity:.62"></div><div style="position:absolute;left:1791px;top:114px;width:6px;height:1px;background:#f92672;opacity:.62"></div><div style="position:absolute;left:1798px;top:114px;width:1px;height:1px;background:#f8f8f2;opacity:.62"></div><div style="position:absolute;left:1793px;top:116px;width:1px;height:1px;background:#f8f8f2;opacity:.62"></div><div style="position:absolute;left:1794px;top:116px;width:3px;height:1px;background:#66d9ef;opacity:.62"></div><div style="position:absolute;left:1795px;top:118px;width:2px;height:1px;background:#a6e22e;opacity:.62"></div><div style="position:absolute;left:1797px;top:118px;width:3px;height:1px;background:#f92672;opacity:.62"></div><div style="position:absolute;left:1797px;top:120px;width:9px;height:1px;background:#f8f8f2;opacity:.62"></div><div style="position:absolute;left:1807px;top:120px;width:10px;height:1px;background:#e6db74;opacity:.62"></div><div style="position:absolute;left:1817px;top:120px;width:1px;height:1px;background:#f8f8f2;opacity:.62"></div><div style="position:absolute;left:1797px;top:122px;width:11px;height:1px;background:#f8f8f2;opacity:.62"></div><div style="position:absolute;left:1809px;top:122px;width:41px;height:1px;background:#e6db74;opacity:.62"></div><div style="position:absolute;left:1851px;top:122px;width:9px;height:1px;background:#e6db74;opacity:.62"></div><div style="position:absolute;left:1861px;top:122px;width:6px;height:1px;background:#e6db74;opacity:.62"></div><div style="position:absolute;left:1868px;top:122px;width:13px;height:1px;background:#e6db74;opacity:.62"></div><div style="position:absolute;left:1881px;top:122px;width:1px;height:1px;background:#f8f8f2;opacity:.62"></div><div style="position:absolute;left:1797px;top:124px;width:7px;height:1px;background:#f8f8f2;opacity:.62"></div><div style="position:absolute;left:1805px;top:124px;width:7px;height:1px;background:#e6db74;opacity:.62"></div><div style="position:absolute;left:1812px;top:124px;width:1px;height:1px;background:#f8f8f2;opacity:.62"></div><div style="position:absolute;left:1797px;top:126px;width:8px;height:1px;background:#f8f8f2;opacity:.62"></div><div style="position:absolute;left:1806px;top:126px;width:6px;height:1px;background:#e6db74;opacity:.62"></div><div style="position:absolute;left:1812px;top:126px;width:1px;height:1px;background:#f8f8f2;opacity:.62"></div><div style="position:absolute;left:1797px;top:128px;width:11px;height:1px;background:#f8f8f2;opacity:.62"></div><div style="position:absolute;left:1809px;top:128px;width:8px;height:1px;background:#e6db74;opacity:.62"></div><div style="position:absolute;left:1817px;top:128px;width:1px;height:1px;background:#f8f8f2;opacity:.62"></div><div style="position:absolute;left:1797px;top:130px;width:14px;height:1px;background:#f8f8f2;opacity:.62"></div><div style="position:absolute;left:1812px;top:130px;width:8px;height:1px;background:#e6db74;opacity:.62"></div><div style="position:absolute;left:1820px;top:130px;width:1px;height:1px;background:#f8f8f2;opacity:.62"></div><div style="position:absolute;left:1797px;top:132px;width:10px;height:1px;background:#f8f8f2;opacity:.62"></div><div style="position:absolute;left:1808px;top:132px;width:8px;height:1px;background:#e6db74;opacity:.62"></div><div style="position:absolute;left:1816px;top:132px;width:1px;height:1px;background:#f8f8f2;opacity:.62"></div><div style="position:absolute;left:1795px;top:134px;width:1px;height:1px;background:#f8f8f2;opacity:.62"></div><div style="position:absolute;left:1796px;top:134px;width:1px;height:1px;background:#f92672;opacity:.62"></div><div style="position:absolute;left:1793px;top:136px;width:1px;height:1px;background:#f8f8f2;opacity:.62"></div><div style="position:absolute;left:1795px;top:138px;width:1px;height:1px;background:#f92672;opacity:.62"></div><div style="position:absolute;left:1796px;top:138px;width:2px;height:1px;background:#75715e;opacity:.62"></div><div style="position:absolute;left:1799px;top:138px;width:7px;height:1px;background:#75715e;opacity:.62"></div><div style="position:absolute;left:1807px;top:138px;width:8px;height:1px;background:#75715e;opacity:.62"></div><div style="position:absolute;left:1816px;top:138px;width:7px;height:1px;background:#75715e;opacity:.62"></div><div style="position:absolute;left:1824px;top:138px;width:2px;height:1px;background:#75715e;opacity:.62"></div><div style="position:absolute;left:1826px;top:138px;width:1px;height:1px;background:#f92672;opacity:.62"></div><div style="position:absolute;left:1795px;top:140px;width:1px;height:1px;background:#f8f8f2;opacity:.62"></div><div style="position:absolute;left:1796px;top:140px;width:3px;height:1px;background:#66d9ef;opacity:.62"></div><div style="position:absolute;left:1797px;top:142px;width:2px;height:1px;background:#a6e22e;opacity:.62"></div><div style="position:absolute;left:1799px;top:142px;width:3px;height:1px;background:#f92672;opacity:.62"></div><div style="position:absolute;left:1799px;top:144px;width:9px;height:1px;background:#f8f8f2;opacity:.62"></div><div style="position:absolute;left:1809px;top:144px;width:10px;height:1px;background:#e6db74;opacity:.62"></div><div style="position:absolute;left:1819px;top:144px;width:1px;height:1px;background:#f8f8f2;opacity:.62"></div><div style="position:absolute;left:1799px;top:146px;width:6px;height:1px;background:#f8f8f2;opacity:.62"></div><div style="position:absolute;left:1806px;top:146px;width:1px;height:1px;background:#ae81ff;opacity:.62"></div><div style="position:absolute;left:1807px;top:146px;width:1px;height:1px;background:#f8f8f2;opacity:.62"></div><div style="position:absolute;left:1799px;top:148px;width:14px;height:1px;background:#f8f8f2;opacity:.62"></div><div style="position:absolute;left:1814px;top:148px;width:6px;height:1px;background:#e6db74;opacity:.62"></div><div style="position:absolute;left:1820px;top:148px;width:1px;height:1px;background:#f8f8f2;opacity:.62"></div><div style="position:absolute;left:1799px;top:150px;width:11px;height:1px;background:#f8f8f2;opacity:.62"></div><div style="position:absolute;left:1811px;top:150px;width:1px;height:1px;background:#f8f8f2;opacity:.62"></div><div style="position:absolute;left:1801px;top:152px;width:16px;height:1px;background:#e6db74;opacity:.62"></div><div style="position:absolute;left:1803px;top:154px;width:2px;height:1px;background:#e6db74;opacity:.62"></div><div style="position:absolute;left:1806px;top:154px;width:4px;height:1px;background:#e6db74;opacity:.62"></div><div style="position:absolute;left:1803px;top:156px;width:1px;height:1px;background:#f8f8f2;opacity:.62"></div><div style="position:absolute;left:1804px;top:156px;width:13px;height:1px;background:#e6db74;opacity:.62"></div><div style="position:absolute;left:1818px;top:156px;width:3px;height:1px;background:#e6db74;opacity:.62"></div><div style="position:absolute;left:1803px;top:158px;width:1px;height:1px;background:#f8f8f2;opacity:.62"></div><div style="position:absolute;left:1804px;top:158px;width:15px;height:1px;background:#e6db74;opacity:.62"></div><div style="position:absolute;left:1820px;top:158px;width:4px;height:1px;background:#e6db74;opacity:.62"></div><div style="position:absolute;left:1803px;top:160px;width:1px;height:1px;background:#f8f8f2;opacity:.62"></div><div style="position:absolute;left:1804px;top:160px;width:7px;height:1px;background:#e6db74;opacity:.62"></div><div style="position:absolute;left:1812px;top:160px;width:2px;height:1px;background:#e6db74;opacity:.62"></div><div style="position:absolute;left:1815px;top:160px;width:2px;height:1px;background:#e6db74;opacity:.62"></div><div style="position:absolute;left:1818px;top:160px;width:4px;height:1px;background:#e6db74;opacity:.62"></div><div style="position:absolute;left:1823px;top:160px;width:4px;height:1px;background:#e6db74;opacity:.62"></div><div style="position:absolute;left:1803px;top:162px;width:1px;height:1px;background:#f8f8f2;opacity:.62"></div><div style="position:absolute;left:1804px;top:162px;width:13px;height:1px;background:#e6db74;opacity:.62"></div><div style="position:absolute;left:1818px;top:162px;width:4px;height:1px;background:#e6db74;opacity:.62"></div><div style="position:absolute;left:1801px;top:164px;width:1px;height:1px;background:#e6db74;opacity:.62"></div><div style="position:absolute;left:1799px;top:166px;width:2px;height:1px;background:#f8f8f2;opacity:.62"></div><div style="position:absolute;left:1799px;top:168px;width:7px;height:1px;background:#f8f8f2;opacity:.62"></div><div style="position:absolute;left:1807px;top:168px;width:1px;height:1px;background:#ae81ff;opacity:.62"></div><div style="position:absolute;left:1808px;top:168px;width:1px;height:1px;background:#f8f8f2;opacity:.62"></div><div style="position:absolute;left:1797px;top:170px;width:1px;height:1px;background:#f8f8f2;opacity:.62"></div><div style="position:absolute;left:1798px;top:170px;width:1px;height:1px;background:#f92672;opacity:.62"></div><div style="position:absolute;left:1795px;top:172px;width:2px;height:1px;background:#f8f8f2;opacity:.62"></div><div style="position:absolute;left:1795px;top:174px;width:1px;height:1px;background:#f8f8f2;opacity:.62"></div><div style="position:absolute;left:1796px;top:174px;width:3px;height:1px;background:#66d9ef;opacity:.62"></div><div style="position:absolute;left:1797px;top:176px;width:2px;height:1px;background:#a6e22e;opacity:.62"></div><div style="position:absolute;left:1799px;top:176px;width:3px;height:1px;background:#f92672;opacity:.62"></div><div style="position:absolute;left:1799px;top:178px;width:6px;height:1px;background:#f8f8f2;opacity:.62"></div><div style="position:absolute;left:1806px;top:178px;width:9px;height:1px;background:#e6db74;opacity:.62"></div><div style="position:absolute;left:1815px;top:178px;width:1px;height:1px;background:#f8f8f2;opacity:.62"></div><div style="position:absolute;left:1799px;top:180px;width:11px;height:1px;background:#f8f8f2;opacity:.62"></div><div style="position:absolute;left:1811px;top:180px;width:4px;height:1px;background:#e6db74;opacity:.62"></div><div style="position:absolute;left:1816px;top:180px;width:3px;height:1px;background:#e6db74;opacity:.62"></div><div style="position:absolute;left:1820px;top:180px;width:3px;height:1px;background:#e6db74;opacity:.62"></div><div style="position:absolute;left:1824px;top:180px;width:1px;height:1px;background:#f8f8f2;opacity:.62"></div><div style="position:absolute;left:1825px;top:180px;width:7px;height:1px;background:#e6db74;opacity:.62"></div><div style="position:absolute;left:1833px;top:180px;width:2px;height:1px;background:#e6db74;opacity:.62"></div><div style="position:absolute;left:1836px;top:180px;width:2px;height:1px;background:#e6db74;opacity:.62"></div><div style="position:absolute;left:1839px;top:180px;width:5px;height:1px;background:#e6db74;opacity:.62"></div><div style="position:absolute;left:1844px;top:180px;width:1px;height:1px;background:#f8f8f2;opacity:.62"></div><div style="position:absolute;left:1799px;top:182px;width:6px;height:1px;background:#f8f8f2;opacity:.62"></div><div style="position:absolute;left:1806px;top:182px;width:5px;height:1px;background:#e6db74;opacity:.62"></div><div style="position:absolute;left:1811px;top:182px;width:1px;height:1px;background:#f8f8f2;opacity:.62"></div><div style="position:absolute;left:1799px;top:184px;width:8px;height:1px;background:#f8f8f2;opacity:.62"></div><div style="position:absolute;left:1808px;top:184px;width:6px;height:1px;background:#e6db74;opacity:.62"></div><div style="position:absolute;left:1814px;top:184px;width:1px;height:1px;background:#f8f8f2;opacity:.62"></div><div style="position:absolute;left:1799px;top:186px;width:9px;height:1px;background:#f8f8f2;opacity:.62"></div><div style="position:absolute;left:1809px;top:186px;width:10px;height:1px;background:#e6db74;opacity:.62"></div><div style="position:absolute;left:1819px;top:186px;width:1px;height:1px;background:#f8f8f2;opacity:.62"></div><div style="position:absolute;left:1799px;top:188px;width:7px;height:1px;background:#f8f8f2;opacity:.62"></div><div style="position:absolute;left:1807px;top:188px;width:1px;height:1px;background:#ae81ff;opacity:.62"></div><div style="position:absolute;left:1808px;top:188px;width:1px;height:1px;background:#f8f8f2;opacity:.62"></div><div style="position:absolute;left:1797px;top:190px;width:1px;height:1px;background:#f8f8f2;opacity:.62"></div><div style="position:absolute;left:1798px;top:190px;width:1px;height:1px;background:#f92672;opacity:.62"></div><div style="position:absolute;left:1795px;top:192px;width:1px;height:1px;background:#f8f8f2;opacity:.62"></div><div style="position:absolute;left:1797px;top:194px;width:1px;height:1px;background:#f8f8f2;opacity:.62"></div><div style="position:absolute;left:1798px;top:194px;width:10px;height:1px;background:#66d9ef;opacity:.62"></div><div style="position:absolute;left:1809px;top:194px;width:7px;height:1px;background:#a6e22e;opacity:.62"></div><div style="position:absolute;left:1816px;top:194px;width:1px;height:1px;background:#f92672;opacity:.62"></div><div style="position:absolute;left:1817px;top:194px;width:4px;height:1px;background:#e6db74;opacity:.62"></div><div style="position:absolute;left:1822px;top:194px;width:2px;height:1px;background:#a6e22e;opacity:.62"></div><div style="position:absolute;left:1824px;top:194px;width:3px;height:1px;background:#f92672;opacity:.62"></div><div style="position:absolute;left:1828px;top:194px;width:3px;height:1px;background:#f8f8f2;opacity:.62"></div><div style="position:absolute;left:1832px;top:194px;width:1px;height:1px;background:#ae81ff;opacity:.62"></div><div style="position:absolute;left:1833px;top:194px;width:1px;height:1px;background:#f8f8f2;opacity:.62"></div><div style="position:absolute;left:1835px;top:194px;width:11px;height:1px;background:#f8f8f2;opacity:.62"></div><div style="position:absolute;left:1847px;top:194px;width:12px;height:1px;background:#e6db74;opacity:.62"></div><div style="position:absolute;left:1860px;top:194px;width:6px;height:1px;background:#e6db74;opacity:.62"></div><div style="position:absolute;left:1867px;top:194px;width:11px;height:1px;background:#e6db74;opacity:.62"></div><div style="position:absolute;left:1878px;top:194px;width:1px;height:1px;background:#f8f8f2;opacity:.62"></div><div style="position:absolute;left:1880px;top:194px;width:9px;height:1px;background:#f8f8f2;opacity:.62"></div><div style="position:absolute;left:1890px;top:194px;width:6px;height:1px;background:#e6db74;opacity:.62"></div><div style="position:absolute;left:1897px;top:194px;width:2px;height:1px;background:#f92672;opacity:.62"></div><div style="position:absolute;left:1799px;top:196px;width:1px;height:1px;background:#f8f8f2;opacity:.62"></div><div style="position:absolute;left:1801px;top:196px;width:10px;height:1px;background:#f8f8f2;opacity:.62"></div><div style="position:absolute;left:1812px;top:196px;width:4px;height:1px;background:#f8f8f2;opacity:.62"></div><div style="position:absolute;left:1797px;top:198px;width:2px;height:1px;background:#f8f8f2;opacity:.62"></div><div style="position:absolute;left:1799px;top:198px;width:10px;height:1px;background:#66d9ef;opacity:.62"></div><div style="position:absolute;left:1809px;top:198px;width:1px;height:1px;background:#f8f8f2;opacity:.62"></div><div style="position:absolute;left:1797px;top:200px;width:1px;height:1px;background:#f8f8f2;opacity:.62"></div><div style="position:absolute;left:1798px;top:200px;width:10px;height:1px;background:#66d9ef;opacity:.62"></div><div style="position:absolute;left:1809px;top:200px;width:7px;height:1px;background:#a6e22e;opacity:.62"></div><div style="position:absolute;left:1816px;top:200px;width:1px;height:1px;background:#f92672;opacity:.62"></div><div style="position:absolute;left:1817px;top:200px;width:4px;height:1px;background:#e6db74;opacity:.62"></div><div style="position:absolute;left:1822px;top:200px;width:2px;height:1px;background:#a6e22e;opacity:.62"></div><div style="position:absolute;left:1824px;top:200px;width:3px;height:1px;background:#f92672;opacity:.62"></div><div style="position:absolute;left:1828px;top:200px;width:3px;height:1px;background:#f8f8f2;opacity:.62"></div><div style="position:absolute;left:1832px;top:200px;width:1px;height:1px;background:#ae81ff;opacity:.62"></div><div style="position:absolute;left:1834px;top:200px;width:2px;height:1px;background:#f92672;opacity:.62"></div><div style="position:absolute;left:1836px;top:200px;width:1px;height:1px;background:#f8f8f2;opacity:.62"></div><div style="position:absolute;left:1799px;top:202px;width:7px;height:1px;background:#f8f8f2;opacity:.62"></div><div style="position:absolute;left:1807px;top:202px;width:3px;height:1px;background:#f8f8f2;opacity:.62"></div><div style="position:absolute;left:1811px;top:202px;width:9px;height:1px;background:#f8f8f2;opacity:.62"></div><div style="position:absolute;left:1821px;top:202px;width:8px;height:1px;background:#f8f8f2;opacity:.62"></div><div style="position:absolute;left:1830px;top:202px;width:3px;height:1px;background:#f8f8f2;opacity:.62"></div><div style="position:absolute;left:1834px;top:202px;width:5px;height:1px;background:#f8f8f2;opacity:.62"></div><div style="position:absolute;left:1797px;top:204px;width:2px;height:1px;background:#f8f8f2;opacity:.62"></div><div style="position:absolute;left:1799px;top:204px;width:10px;height:1px;background:#66d9ef;opacity:.62"></div><div style="position:absolute;left:1809px;top:204px;width:1px;height:1px;background:#f8f8f2;opacity:.62"></div><div style="position:absolute;left:1797px;top:206px;width:1px;height:1px;background:#f8f8f2;opacity:.62"></div><div style="position:absolute;left:1798px;top:206px;width:5px;height:1px;background:#66d9ef;opacity:.62"></div><div style="position:absolute;left:1804px;top:206px;width:9px;height:1px;background:#a6e22e;opacity:.62"></div><div style="position:absolute;left:1813px;top:206px;width:1px;height:1px;background:#f92672;opacity:.62"></div><div style="position:absolute;left:1814px;top:206px;width:5px;height:1px;background:#e6db74;opacity:.62"></div><div style="position:absolute;left:1820px;top:206px;width:7px;height:1px;background:#a6e22e;opacity:.62"></div><div style="position:absolute;left:1827px;top:206px;width:4px;height:1px;background:#f92672;opacity:.62"></div><div style="position:absolute;left:1832px;top:206px;width:14px;height:1px;background:#a6e22e;opacity:.62"></div><div style="position:absolute;left:1846px;top:206px;width:1px;height:1px;background:#f92672;opacity:.62"></div><div style="position:absolute;left:1847px;top:206px;width:8px;height:1px;background:#e6db74;opacity:.62"></div><div style="position:absolute;left:1855px;top:206px;width:1px;height:1px;background:#f8f8f2;opacity:.62"></div><div style="position:absolute;left:1799px;top:208px;width:1px;height:1px;background:#f8f8f2;opacity:.62"></div><div style="position:absolute;left:1800px;top:208px;width:6px;height:1px;background:#66d9ef;opacity:.62"></div><div style="position:absolute;left:1807px;top:208px;width:7px;height:1px;background:#a6e22e;opacity:.62"></div><div style="position:absolute;left:1814px;top:208px;width:1px;height:1px;background:#f92672;opacity:.62"></div><div style="position:absolute;left:1815px;top:208px;width:11px;height:1px;background:#e6db74;opacity:.62"></div><div style="position:absolute;left:1826px;top:208px;width:1px;height:1px;background:#f8f8f2;opacity:.62"></div><div style="position:absolute;left:1801px;top:210px;width:12px;height:1px;background:#f8f8f2;opacity:.62"></div><div style="position:absolute;left:1799px;top:212px;width:2px;height:1px;background:#f8f8f2;opacity:.62"></div><div style="position:absolute;left:1801px;top:212px;width:6px;height:1px;background:#66d9ef;opacity:.62"></div><div style="position:absolute;left:1807px;top:212px;width:1px;height:1px;background:#f8f8f2;opacity:.62"></div><div style="position:absolute;left:1799px;top:214px;width:1px;height:1px;background:#f8f8f2;opacity:.62"></div><div style="position:absolute;left:1800px;top:214px;width:6px;height:1px;background:#66d9ef;opacity:.62"></div><div style="position:absolute;left:1807px;top:214px;width:7px;height:1px;background:#a6e22e;opacity:.62"></div><div style="position:absolute;left:1814px;top:214px;width:1px;height:1px;background:#f92672;opacity:.62"></div><div style="position:absolute;left:1815px;top:214px;width:11px;height:1px;background:#e6db74;opacity:.62"></div><div style="position:absolute;left:1826px;top:214px;width:1px;height:1px;background:#f8f8f2;opacity:.62"></div><div style="position:absolute;left:1801px;top:216px;width:9px;height:1px;background:#f8f8f2;opacity:.62"></div><div style="position:absolute;left:1811px;top:216px;width:3px;height:1px;background:#f8f8f2;opacity:.62"></div><div style="position:absolute;left:1799px;top:218px;width:2px;height:1px;background:#f8f8f2;opacity:.62"></div><div style="position:absolute;left:1801px;top:218px;width:6px;height:1px;background:#66d9ef;opacity:.62"></div><div style="position:absolute;left:1807px;top:218px;width:1px;height:1px;background:#f8f8f2;opacity:.62"></div><div style="position:absolute;left:1797px;top:220px;width:2px;height:1px;background:#f8f8f2;opacity:.62"></div><div style="position:absolute;left:1799px;top:220px;width:5px;height:1px;background:#66d9ef;opacity:.62"></div><div style="position:absolute;left:1804px;top:220px;width:1px;height:1px;background:#f8f8f2;opacity:.62"></div><div style="position:absolute;left:1795px;top:222px;width:2px;height:1px;background:#f8f8f2;opacity:.62"></div><div style="position:absolute;left:1797px;top:222px;width:3px;height:1px;background:#66d9ef;opacity:.62"></div><div style="position:absolute;left:1800px;top:222px;width:1px;height:1px;background:#f8f8f2;opacity:.62"></div><div style="position:absolute;left:1793px;top:224px;width:2px;height:1px;background:#f8f8f2;opacity:.62"></div><div style="position:absolute;left:1795px;top:224px;width:3px;height:1px;background:#66d9ef;opacity:.62"></div><div style="position:absolute;left:1798px;top:224px;width:1px;height:1px;background:#f8f8f2;opacity:.62"></div><div style="position:absolute;left:1791px;top:226px;width:2px;height:1px;background:#f8f8f2;opacity:.62"></div><div style="position:absolute;left:1789px;top:228px;width:1px;height:1px;background:#f8f8f2;opacity:.62"></div><div style="position:absolute;left:1789px;top:232px;width:6px;height:1px;background:#f92672;opacity:.62"></div><div style="position:absolute;left:1796px;top:232px;width:7px;height:1px;background:#f92672;opacity:.62"></div><div style="position:absolute;left:1804px;top:232px;width:4px;height:1px;background:#a6e22e;opacity:.62"></div><div style="position:absolute;left:1808px;top:232px;width:1px;height:1px;background:#f8f8f2;opacity:.62"></div>
</div></body></html>
